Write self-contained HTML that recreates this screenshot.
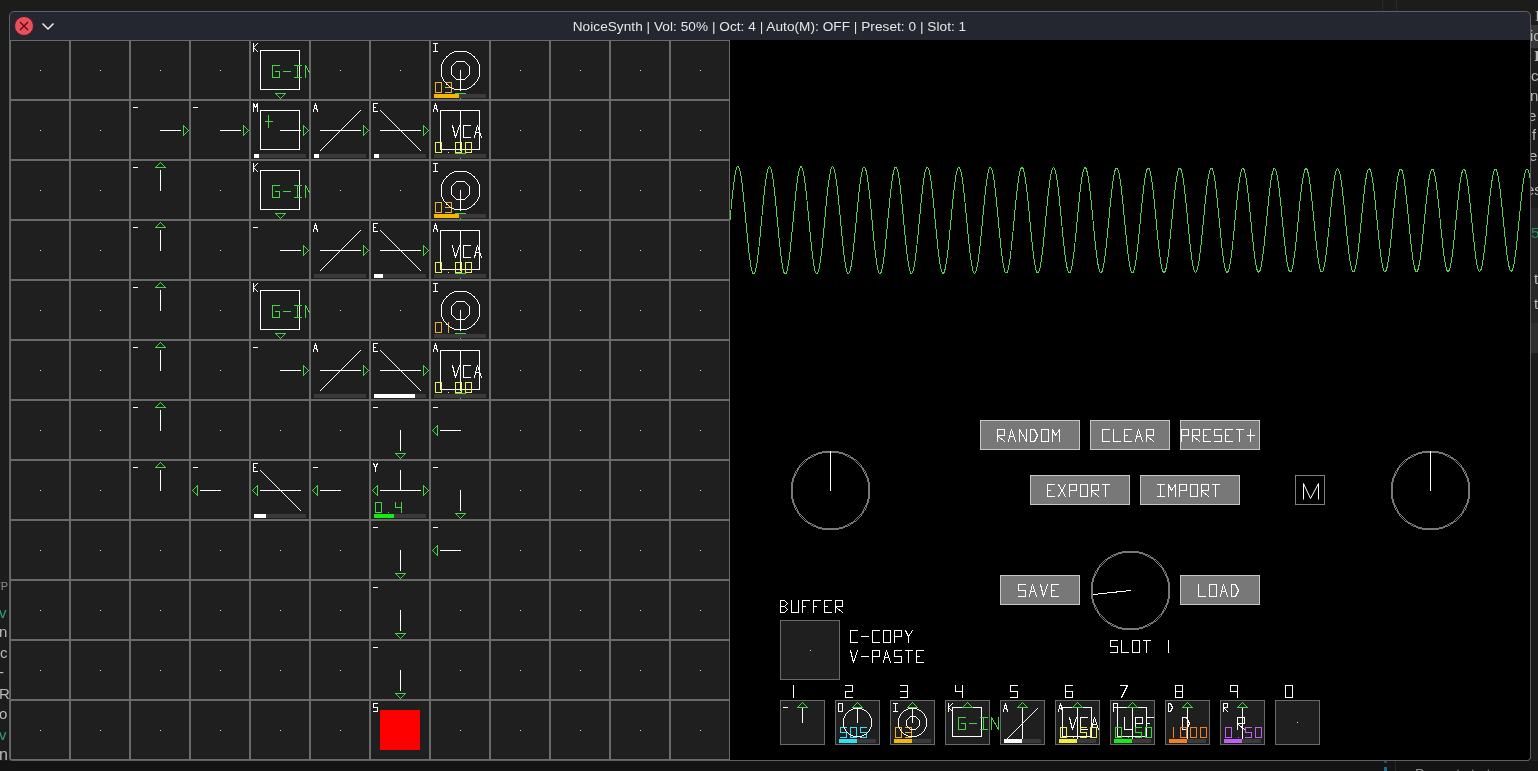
<!DOCTYPE html>
<html><head><meta charset="utf-8">
<style>
html,body{margin:0;padding:0;background:#1c1c1b;width:1538px;height:771px;overflow:hidden;position:relative}
#win{position:absolute;left:9px;top:11px;width:1520px;height:748px;border:1px solid #5d6067;border-radius:5px 5px 3px 3px;background:#24272f;overflow:hidden}
#title{position:absolute;left:0;top:13px;width:1539px;height:28px;line-height:28px;text-align:center;font-family:"Liberation Sans",sans-serif;font-size:13.6px;letter-spacing:0.05px;color:#e6e6e6;white-space:nowrap;will-change:transform}
.fr{position:absolute;font-family:"Liberation Sans",sans-serif;font-size:15px;color:#b8b8b8;white-space:nowrap;overflow:hidden;will-change:transform}
</style></head><body>
<div style="position:absolute;left:1382px;top:0;width:1px;height:11px;background:#2a2a2a"></div><div style="position:absolute;left:1396px;top:0;width:1px;height:11px;background:#2a2a2a"></div>
<div id="win"></div>
<svg width="1538" height="771" style="position:absolute;left:0;top:0">
<circle cx="24" cy="26" r="9.5" fill="#e8505c" stroke="#4a1a22" stroke-width="1"/>
<path d="M20 22L28 30M28 22L20 30" stroke="#5a0a14" stroke-width="1.3"/>
<path d="M42.5 23.5L48 29L53.5 23.5" stroke="#f0f0f0" stroke-width="1.5" fill="none"/>
</svg>
<div style="position:absolute;left:0;top:0;width:9px;height:771px;overflow:hidden">
<div class="fr" style="left:-6px;top:580px;font-size:11px;color:#8a8a8a">TP</div>
<div class="fr" style="left:-1px;top:604px;color:#2fa27a">v</div>
<div class="fr" style="left:-1px;top:623px">n</div>
<div class="fr" style="left:0px;top:644px">c</div>
<div class="fr" style="left:-1px;top:663px">-</div>
<div class="fr" style="left:-1px;top:685px">R</div>
<div class="fr" style="left:-1px;top:705px">o</div>
<div class="fr" style="left:-1px;top:726px;color:#2fa27a">v</div>
<div class="fr" style="left:-1px;top:746px;font-size:16px">n</div>
</div>
<div style="position:absolute;left:1531px;top:0;width:7px;height:771px;overflow:hidden;background:#1c1c1c">
<div style="position:absolute;left:0;top:25px;width:7px;height:23px;background:#363636"></div>
<div style="position:absolute;left:0;top:208px;width:7px;height:115px;background:#262626"></div><div style="position:absolute;left:0;top:323px;width:7px;height:30px;background:#2e2e2e"></div>
<div class="fr" style="left:4px;top:8px;font-family:'Liberation Serif',serif">I</div>
<div class="fr" style="left:-1px;top:27px">ic</div>
<div class="fr" style="left:3px;top:48px;font-family:'Liberation Serif',serif;font-weight:bold">I</div>
<div class="fr" style="left:0px;top:67px">c</div>
<div class="fr" style="left:-1px;top:87px">n</div>
<div class="fr" style="left:-3px;top:107px">e</div>
<div class="fr" style="left:1px;top:126px">f</div>
<div class="fr" style="left:-2px;top:147px">e</div>
<div class="fr" style="left:-5px;top:181px">es</div>
<div class="fr" style="left:0px;top:224px;color:#2a8a5a">5</div>
<div class="fr" style="left:3px;top:270px">t</div>
<div class="fr" style="left:3px;top:295px">t</div>
</div>
<div style="position:absolute;left:0;top:761px;width:1538px;height:10px;background:#141414"></div>
<div style="position:absolute;left:1384px;top:761px;width:3px;height:2px;background:#2a4a5a"></div><div style="position:absolute;left:1384px;top:767px;width:3px;height:4px;background:#1d6a8a"></div>
<div style="position:absolute;left:1395px;top:761px;width:1px;height:10px;background:#262626"></div>
<div class="fr" style="left:1415px;top:766px;font-size:14px;color:#8c8c8c">Prompts to try</div>
<div id="title">NoiceSynth | Vol: 50% | Oct: 4 | Auto(M): OFF | Preset: 0 | Slot: 1</div>
<svg width="1538" height="771" viewBox="0 0 1538 771" shape-rendering="crispEdges" stroke-linecap="square" stroke-linejoin="bevel" fill="none" stroke-width="1" style="position:absolute;left:0;top:0">
<rect x="10" y="40" width="60" height="60" fill="#1f1f1f"/>
<rect x="10.5" y="40.5" width="59" height="59" fill="none" stroke="#6a6a6a"/>
<rect x="70" y="40" width="60" height="60" fill="#1f1f1f"/>
<rect x="70.5" y="40.5" width="59" height="59" fill="none" stroke="#6a6a6a"/>
<rect x="130" y="40" width="60" height="60" fill="#1f1f1f"/>
<rect x="130.5" y="40.5" width="59" height="59" fill="none" stroke="#6a6a6a"/>
<rect x="190" y="40" width="60" height="60" fill="#1f1f1f"/>
<rect x="190.5" y="40.5" width="59" height="59" fill="none" stroke="#6a6a6a"/>
<rect x="250" y="40" width="60" height="60" fill="#1f1f1f"/>
<rect x="250.5" y="40.5" width="59" height="59" fill="none" stroke="#6a6a6a"/>
<rect x="310" y="40" width="60" height="60" fill="#1f1f1f"/>
<rect x="310.5" y="40.5" width="59" height="59" fill="none" stroke="#6a6a6a"/>
<rect x="370" y="40" width="60" height="60" fill="#1f1f1f"/>
<rect x="370.5" y="40.5" width="59" height="59" fill="none" stroke="#6a6a6a"/>
<rect x="430" y="40" width="60" height="60" fill="#1f1f1f"/>
<rect x="430.5" y="40.5" width="59" height="59" fill="none" stroke="#6a6a6a"/>
<rect x="490" y="40" width="60" height="60" fill="#1f1f1f"/>
<rect x="490.5" y="40.5" width="59" height="59" fill="none" stroke="#6a6a6a"/>
<rect x="550" y="40" width="60" height="60" fill="#1f1f1f"/>
<rect x="550.5" y="40.5" width="59" height="59" fill="none" stroke="#6a6a6a"/>
<rect x="610" y="40" width="60" height="60" fill="#1f1f1f"/>
<rect x="610.5" y="40.5" width="59" height="59" fill="none" stroke="#6a6a6a"/>
<rect x="670" y="40" width="60" height="60" fill="#1f1f1f"/>
<rect x="670.5" y="40.5" width="59" height="59" fill="none" stroke="#6a6a6a"/>
<rect x="10" y="100" width="60" height="60" fill="#1f1f1f"/>
<rect x="10.5" y="100.5" width="59" height="59" fill="none" stroke="#6a6a6a"/>
<rect x="70" y="100" width="60" height="60" fill="#1f1f1f"/>
<rect x="70.5" y="100.5" width="59" height="59" fill="none" stroke="#6a6a6a"/>
<rect x="130" y="100" width="60" height="60" fill="#1f1f1f"/>
<rect x="130.5" y="100.5" width="59" height="59" fill="none" stroke="#6a6a6a"/>
<rect x="190" y="100" width="60" height="60" fill="#1f1f1f"/>
<rect x="190.5" y="100.5" width="59" height="59" fill="none" stroke="#6a6a6a"/>
<rect x="250" y="100" width="60" height="60" fill="#1f1f1f"/>
<rect x="250.5" y="100.5" width="59" height="59" fill="none" stroke="#6a6a6a"/>
<rect x="310" y="100" width="60" height="60" fill="#1f1f1f"/>
<rect x="310.5" y="100.5" width="59" height="59" fill="none" stroke="#6a6a6a"/>
<rect x="370" y="100" width="60" height="60" fill="#1f1f1f"/>
<rect x="370.5" y="100.5" width="59" height="59" fill="none" stroke="#6a6a6a"/>
<rect x="430" y="100" width="60" height="60" fill="#1f1f1f"/>
<rect x="430.5" y="100.5" width="59" height="59" fill="none" stroke="#6a6a6a"/>
<rect x="490" y="100" width="60" height="60" fill="#1f1f1f"/>
<rect x="490.5" y="100.5" width="59" height="59" fill="none" stroke="#6a6a6a"/>
<rect x="550" y="100" width="60" height="60" fill="#1f1f1f"/>
<rect x="550.5" y="100.5" width="59" height="59" fill="none" stroke="#6a6a6a"/>
<rect x="610" y="100" width="60" height="60" fill="#1f1f1f"/>
<rect x="610.5" y="100.5" width="59" height="59" fill="none" stroke="#6a6a6a"/>
<rect x="670" y="100" width="60" height="60" fill="#1f1f1f"/>
<rect x="670.5" y="100.5" width="59" height="59" fill="none" stroke="#6a6a6a"/>
<rect x="10" y="160" width="60" height="60" fill="#1f1f1f"/>
<rect x="10.5" y="160.5" width="59" height="59" fill="none" stroke="#6a6a6a"/>
<rect x="70" y="160" width="60" height="60" fill="#1f1f1f"/>
<rect x="70.5" y="160.5" width="59" height="59" fill="none" stroke="#6a6a6a"/>
<rect x="130" y="160" width="60" height="60" fill="#1f1f1f"/>
<rect x="130.5" y="160.5" width="59" height="59" fill="none" stroke="#6a6a6a"/>
<rect x="190" y="160" width="60" height="60" fill="#1f1f1f"/>
<rect x="190.5" y="160.5" width="59" height="59" fill="none" stroke="#6a6a6a"/>
<rect x="250" y="160" width="60" height="60" fill="#1f1f1f"/>
<rect x="250.5" y="160.5" width="59" height="59" fill="none" stroke="#6a6a6a"/>
<rect x="310" y="160" width="60" height="60" fill="#1f1f1f"/>
<rect x="310.5" y="160.5" width="59" height="59" fill="none" stroke="#6a6a6a"/>
<rect x="370" y="160" width="60" height="60" fill="#1f1f1f"/>
<rect x="370.5" y="160.5" width="59" height="59" fill="none" stroke="#6a6a6a"/>
<rect x="430" y="160" width="60" height="60" fill="#1f1f1f"/>
<rect x="430.5" y="160.5" width="59" height="59" fill="none" stroke="#6a6a6a"/>
<rect x="490" y="160" width="60" height="60" fill="#1f1f1f"/>
<rect x="490.5" y="160.5" width="59" height="59" fill="none" stroke="#6a6a6a"/>
<rect x="550" y="160" width="60" height="60" fill="#1f1f1f"/>
<rect x="550.5" y="160.5" width="59" height="59" fill="none" stroke="#6a6a6a"/>
<rect x="610" y="160" width="60" height="60" fill="#1f1f1f"/>
<rect x="610.5" y="160.5" width="59" height="59" fill="none" stroke="#6a6a6a"/>
<rect x="670" y="160" width="60" height="60" fill="#1f1f1f"/>
<rect x="670.5" y="160.5" width="59" height="59" fill="none" stroke="#6a6a6a"/>
<rect x="10" y="220" width="60" height="60" fill="#1f1f1f"/>
<rect x="10.5" y="220.5" width="59" height="59" fill="none" stroke="#6a6a6a"/>
<rect x="70" y="220" width="60" height="60" fill="#1f1f1f"/>
<rect x="70.5" y="220.5" width="59" height="59" fill="none" stroke="#6a6a6a"/>
<rect x="130" y="220" width="60" height="60" fill="#1f1f1f"/>
<rect x="130.5" y="220.5" width="59" height="59" fill="none" stroke="#6a6a6a"/>
<rect x="190" y="220" width="60" height="60" fill="#1f1f1f"/>
<rect x="190.5" y="220.5" width="59" height="59" fill="none" stroke="#6a6a6a"/>
<rect x="250" y="220" width="60" height="60" fill="#1f1f1f"/>
<rect x="250.5" y="220.5" width="59" height="59" fill="none" stroke="#6a6a6a"/>
<rect x="310" y="220" width="60" height="60" fill="#1f1f1f"/>
<rect x="310.5" y="220.5" width="59" height="59" fill="none" stroke="#6a6a6a"/>
<rect x="370" y="220" width="60" height="60" fill="#1f1f1f"/>
<rect x="370.5" y="220.5" width="59" height="59" fill="none" stroke="#6a6a6a"/>
<rect x="430" y="220" width="60" height="60" fill="#1f1f1f"/>
<rect x="430.5" y="220.5" width="59" height="59" fill="none" stroke="#6a6a6a"/>
<rect x="490" y="220" width="60" height="60" fill="#1f1f1f"/>
<rect x="490.5" y="220.5" width="59" height="59" fill="none" stroke="#6a6a6a"/>
<rect x="550" y="220" width="60" height="60" fill="#1f1f1f"/>
<rect x="550.5" y="220.5" width="59" height="59" fill="none" stroke="#6a6a6a"/>
<rect x="610" y="220" width="60" height="60" fill="#1f1f1f"/>
<rect x="610.5" y="220.5" width="59" height="59" fill="none" stroke="#6a6a6a"/>
<rect x="670" y="220" width="60" height="60" fill="#1f1f1f"/>
<rect x="670.5" y="220.5" width="59" height="59" fill="none" stroke="#6a6a6a"/>
<rect x="10" y="280" width="60" height="60" fill="#1f1f1f"/>
<rect x="10.5" y="280.5" width="59" height="59" fill="none" stroke="#6a6a6a"/>
<rect x="70" y="280" width="60" height="60" fill="#1f1f1f"/>
<rect x="70.5" y="280.5" width="59" height="59" fill="none" stroke="#6a6a6a"/>
<rect x="130" y="280" width="60" height="60" fill="#1f1f1f"/>
<rect x="130.5" y="280.5" width="59" height="59" fill="none" stroke="#6a6a6a"/>
<rect x="190" y="280" width="60" height="60" fill="#1f1f1f"/>
<rect x="190.5" y="280.5" width="59" height="59" fill="none" stroke="#6a6a6a"/>
<rect x="250" y="280" width="60" height="60" fill="#1f1f1f"/>
<rect x="250.5" y="280.5" width="59" height="59" fill="none" stroke="#6a6a6a"/>
<rect x="310" y="280" width="60" height="60" fill="#1f1f1f"/>
<rect x="310.5" y="280.5" width="59" height="59" fill="none" stroke="#6a6a6a"/>
<rect x="370" y="280" width="60" height="60" fill="#1f1f1f"/>
<rect x="370.5" y="280.5" width="59" height="59" fill="none" stroke="#6a6a6a"/>
<rect x="430" y="280" width="60" height="60" fill="#1f1f1f"/>
<rect x="430.5" y="280.5" width="59" height="59" fill="none" stroke="#6a6a6a"/>
<rect x="490" y="280" width="60" height="60" fill="#1f1f1f"/>
<rect x="490.5" y="280.5" width="59" height="59" fill="none" stroke="#6a6a6a"/>
<rect x="550" y="280" width="60" height="60" fill="#1f1f1f"/>
<rect x="550.5" y="280.5" width="59" height="59" fill="none" stroke="#6a6a6a"/>
<rect x="610" y="280" width="60" height="60" fill="#1f1f1f"/>
<rect x="610.5" y="280.5" width="59" height="59" fill="none" stroke="#6a6a6a"/>
<rect x="670" y="280" width="60" height="60" fill="#1f1f1f"/>
<rect x="670.5" y="280.5" width="59" height="59" fill="none" stroke="#6a6a6a"/>
<rect x="10" y="340" width="60" height="60" fill="#1f1f1f"/>
<rect x="10.5" y="340.5" width="59" height="59" fill="none" stroke="#6a6a6a"/>
<rect x="70" y="340" width="60" height="60" fill="#1f1f1f"/>
<rect x="70.5" y="340.5" width="59" height="59" fill="none" stroke="#6a6a6a"/>
<rect x="130" y="340" width="60" height="60" fill="#1f1f1f"/>
<rect x="130.5" y="340.5" width="59" height="59" fill="none" stroke="#6a6a6a"/>
<rect x="190" y="340" width="60" height="60" fill="#1f1f1f"/>
<rect x="190.5" y="340.5" width="59" height="59" fill="none" stroke="#6a6a6a"/>
<rect x="250" y="340" width="60" height="60" fill="#1f1f1f"/>
<rect x="250.5" y="340.5" width="59" height="59" fill="none" stroke="#6a6a6a"/>
<rect x="310" y="340" width="60" height="60" fill="#1f1f1f"/>
<rect x="310.5" y="340.5" width="59" height="59" fill="none" stroke="#6a6a6a"/>
<rect x="370" y="340" width="60" height="60" fill="#1f1f1f"/>
<rect x="370.5" y="340.5" width="59" height="59" fill="none" stroke="#6a6a6a"/>
<rect x="430" y="340" width="60" height="60" fill="#1f1f1f"/>
<rect x="430.5" y="340.5" width="59" height="59" fill="none" stroke="#6a6a6a"/>
<rect x="490" y="340" width="60" height="60" fill="#1f1f1f"/>
<rect x="490.5" y="340.5" width="59" height="59" fill="none" stroke="#6a6a6a"/>
<rect x="550" y="340" width="60" height="60" fill="#1f1f1f"/>
<rect x="550.5" y="340.5" width="59" height="59" fill="none" stroke="#6a6a6a"/>
<rect x="610" y="340" width="60" height="60" fill="#1f1f1f"/>
<rect x="610.5" y="340.5" width="59" height="59" fill="none" stroke="#6a6a6a"/>
<rect x="670" y="340" width="60" height="60" fill="#1f1f1f"/>
<rect x="670.5" y="340.5" width="59" height="59" fill="none" stroke="#6a6a6a"/>
<rect x="10" y="400" width="60" height="60" fill="#1f1f1f"/>
<rect x="10.5" y="400.5" width="59" height="59" fill="none" stroke="#6a6a6a"/>
<rect x="70" y="400" width="60" height="60" fill="#1f1f1f"/>
<rect x="70.5" y="400.5" width="59" height="59" fill="none" stroke="#6a6a6a"/>
<rect x="130" y="400" width="60" height="60" fill="#1f1f1f"/>
<rect x="130.5" y="400.5" width="59" height="59" fill="none" stroke="#6a6a6a"/>
<rect x="190" y="400" width="60" height="60" fill="#1f1f1f"/>
<rect x="190.5" y="400.5" width="59" height="59" fill="none" stroke="#6a6a6a"/>
<rect x="250" y="400" width="60" height="60" fill="#1f1f1f"/>
<rect x="250.5" y="400.5" width="59" height="59" fill="none" stroke="#6a6a6a"/>
<rect x="310" y="400" width="60" height="60" fill="#1f1f1f"/>
<rect x="310.5" y="400.5" width="59" height="59" fill="none" stroke="#6a6a6a"/>
<rect x="370" y="400" width="60" height="60" fill="#1f1f1f"/>
<rect x="370.5" y="400.5" width="59" height="59" fill="none" stroke="#6a6a6a"/>
<rect x="430" y="400" width="60" height="60" fill="#1f1f1f"/>
<rect x="430.5" y="400.5" width="59" height="59" fill="none" stroke="#6a6a6a"/>
<rect x="490" y="400" width="60" height="60" fill="#1f1f1f"/>
<rect x="490.5" y="400.5" width="59" height="59" fill="none" stroke="#6a6a6a"/>
<rect x="550" y="400" width="60" height="60" fill="#1f1f1f"/>
<rect x="550.5" y="400.5" width="59" height="59" fill="none" stroke="#6a6a6a"/>
<rect x="610" y="400" width="60" height="60" fill="#1f1f1f"/>
<rect x="610.5" y="400.5" width="59" height="59" fill="none" stroke="#6a6a6a"/>
<rect x="670" y="400" width="60" height="60" fill="#1f1f1f"/>
<rect x="670.5" y="400.5" width="59" height="59" fill="none" stroke="#6a6a6a"/>
<rect x="10" y="460" width="60" height="60" fill="#1f1f1f"/>
<rect x="10.5" y="460.5" width="59" height="59" fill="none" stroke="#6a6a6a"/>
<rect x="70" y="460" width="60" height="60" fill="#1f1f1f"/>
<rect x="70.5" y="460.5" width="59" height="59" fill="none" stroke="#6a6a6a"/>
<rect x="130" y="460" width="60" height="60" fill="#1f1f1f"/>
<rect x="130.5" y="460.5" width="59" height="59" fill="none" stroke="#6a6a6a"/>
<rect x="190" y="460" width="60" height="60" fill="#1f1f1f"/>
<rect x="190.5" y="460.5" width="59" height="59" fill="none" stroke="#6a6a6a"/>
<rect x="250" y="460" width="60" height="60" fill="#1f1f1f"/>
<rect x="250.5" y="460.5" width="59" height="59" fill="none" stroke="#6a6a6a"/>
<rect x="310" y="460" width="60" height="60" fill="#1f1f1f"/>
<rect x="310.5" y="460.5" width="59" height="59" fill="none" stroke="#6a6a6a"/>
<rect x="370" y="460" width="60" height="60" fill="#1f1f1f"/>
<rect x="370.5" y="460.5" width="59" height="59" fill="none" stroke="#6a6a6a"/>
<rect x="430" y="460" width="60" height="60" fill="#1f1f1f"/>
<rect x="430.5" y="460.5" width="59" height="59" fill="none" stroke="#6a6a6a"/>
<rect x="490" y="460" width="60" height="60" fill="#1f1f1f"/>
<rect x="490.5" y="460.5" width="59" height="59" fill="none" stroke="#6a6a6a"/>
<rect x="550" y="460" width="60" height="60" fill="#1f1f1f"/>
<rect x="550.5" y="460.5" width="59" height="59" fill="none" stroke="#6a6a6a"/>
<rect x="610" y="460" width="60" height="60" fill="#1f1f1f"/>
<rect x="610.5" y="460.5" width="59" height="59" fill="none" stroke="#6a6a6a"/>
<rect x="670" y="460" width="60" height="60" fill="#1f1f1f"/>
<rect x="670.5" y="460.5" width="59" height="59" fill="none" stroke="#6a6a6a"/>
<rect x="10" y="520" width="60" height="60" fill="#1f1f1f"/>
<rect x="10.5" y="520.5" width="59" height="59" fill="none" stroke="#6a6a6a"/>
<rect x="70" y="520" width="60" height="60" fill="#1f1f1f"/>
<rect x="70.5" y="520.5" width="59" height="59" fill="none" stroke="#6a6a6a"/>
<rect x="130" y="520" width="60" height="60" fill="#1f1f1f"/>
<rect x="130.5" y="520.5" width="59" height="59" fill="none" stroke="#6a6a6a"/>
<rect x="190" y="520" width="60" height="60" fill="#1f1f1f"/>
<rect x="190.5" y="520.5" width="59" height="59" fill="none" stroke="#6a6a6a"/>
<rect x="250" y="520" width="60" height="60" fill="#1f1f1f"/>
<rect x="250.5" y="520.5" width="59" height="59" fill="none" stroke="#6a6a6a"/>
<rect x="310" y="520" width="60" height="60" fill="#1f1f1f"/>
<rect x="310.5" y="520.5" width="59" height="59" fill="none" stroke="#6a6a6a"/>
<rect x="370" y="520" width="60" height="60" fill="#1f1f1f"/>
<rect x="370.5" y="520.5" width="59" height="59" fill="none" stroke="#6a6a6a"/>
<rect x="430" y="520" width="60" height="60" fill="#1f1f1f"/>
<rect x="430.5" y="520.5" width="59" height="59" fill="none" stroke="#6a6a6a"/>
<rect x="490" y="520" width="60" height="60" fill="#1f1f1f"/>
<rect x="490.5" y="520.5" width="59" height="59" fill="none" stroke="#6a6a6a"/>
<rect x="550" y="520" width="60" height="60" fill="#1f1f1f"/>
<rect x="550.5" y="520.5" width="59" height="59" fill="none" stroke="#6a6a6a"/>
<rect x="610" y="520" width="60" height="60" fill="#1f1f1f"/>
<rect x="610.5" y="520.5" width="59" height="59" fill="none" stroke="#6a6a6a"/>
<rect x="670" y="520" width="60" height="60" fill="#1f1f1f"/>
<rect x="670.5" y="520.5" width="59" height="59" fill="none" stroke="#6a6a6a"/>
<rect x="10" y="580" width="60" height="60" fill="#1f1f1f"/>
<rect x="10.5" y="580.5" width="59" height="59" fill="none" stroke="#6a6a6a"/>
<rect x="70" y="580" width="60" height="60" fill="#1f1f1f"/>
<rect x="70.5" y="580.5" width="59" height="59" fill="none" stroke="#6a6a6a"/>
<rect x="130" y="580" width="60" height="60" fill="#1f1f1f"/>
<rect x="130.5" y="580.5" width="59" height="59" fill="none" stroke="#6a6a6a"/>
<rect x="190" y="580" width="60" height="60" fill="#1f1f1f"/>
<rect x="190.5" y="580.5" width="59" height="59" fill="none" stroke="#6a6a6a"/>
<rect x="250" y="580" width="60" height="60" fill="#1f1f1f"/>
<rect x="250.5" y="580.5" width="59" height="59" fill="none" stroke="#6a6a6a"/>
<rect x="310" y="580" width="60" height="60" fill="#1f1f1f"/>
<rect x="310.5" y="580.5" width="59" height="59" fill="none" stroke="#6a6a6a"/>
<rect x="370" y="580" width="60" height="60" fill="#1f1f1f"/>
<rect x="370.5" y="580.5" width="59" height="59" fill="none" stroke="#6a6a6a"/>
<rect x="430" y="580" width="60" height="60" fill="#1f1f1f"/>
<rect x="430.5" y="580.5" width="59" height="59" fill="none" stroke="#6a6a6a"/>
<rect x="490" y="580" width="60" height="60" fill="#1f1f1f"/>
<rect x="490.5" y="580.5" width="59" height="59" fill="none" stroke="#6a6a6a"/>
<rect x="550" y="580" width="60" height="60" fill="#1f1f1f"/>
<rect x="550.5" y="580.5" width="59" height="59" fill="none" stroke="#6a6a6a"/>
<rect x="610" y="580" width="60" height="60" fill="#1f1f1f"/>
<rect x="610.5" y="580.5" width="59" height="59" fill="none" stroke="#6a6a6a"/>
<rect x="670" y="580" width="60" height="60" fill="#1f1f1f"/>
<rect x="670.5" y="580.5" width="59" height="59" fill="none" stroke="#6a6a6a"/>
<rect x="10" y="640" width="60" height="60" fill="#1f1f1f"/>
<rect x="10.5" y="640.5" width="59" height="59" fill="none" stroke="#6a6a6a"/>
<rect x="70" y="640" width="60" height="60" fill="#1f1f1f"/>
<rect x="70.5" y="640.5" width="59" height="59" fill="none" stroke="#6a6a6a"/>
<rect x="130" y="640" width="60" height="60" fill="#1f1f1f"/>
<rect x="130.5" y="640.5" width="59" height="59" fill="none" stroke="#6a6a6a"/>
<rect x="190" y="640" width="60" height="60" fill="#1f1f1f"/>
<rect x="190.5" y="640.5" width="59" height="59" fill="none" stroke="#6a6a6a"/>
<rect x="250" y="640" width="60" height="60" fill="#1f1f1f"/>
<rect x="250.5" y="640.5" width="59" height="59" fill="none" stroke="#6a6a6a"/>
<rect x="310" y="640" width="60" height="60" fill="#1f1f1f"/>
<rect x="310.5" y="640.5" width="59" height="59" fill="none" stroke="#6a6a6a"/>
<rect x="370" y="640" width="60" height="60" fill="#1f1f1f"/>
<rect x="370.5" y="640.5" width="59" height="59" fill="none" stroke="#6a6a6a"/>
<rect x="430" y="640" width="60" height="60" fill="#1f1f1f"/>
<rect x="430.5" y="640.5" width="59" height="59" fill="none" stroke="#6a6a6a"/>
<rect x="490" y="640" width="60" height="60" fill="#1f1f1f"/>
<rect x="490.5" y="640.5" width="59" height="59" fill="none" stroke="#6a6a6a"/>
<rect x="550" y="640" width="60" height="60" fill="#1f1f1f"/>
<rect x="550.5" y="640.5" width="59" height="59" fill="none" stroke="#6a6a6a"/>
<rect x="610" y="640" width="60" height="60" fill="#1f1f1f"/>
<rect x="610.5" y="640.5" width="59" height="59" fill="none" stroke="#6a6a6a"/>
<rect x="670" y="640" width="60" height="60" fill="#1f1f1f"/>
<rect x="670.5" y="640.5" width="59" height="59" fill="none" stroke="#6a6a6a"/>
<rect x="10" y="700" width="60" height="60" fill="#1f1f1f"/>
<rect x="10.5" y="700.5" width="59" height="59" fill="none" stroke="#6a6a6a"/>
<rect x="70" y="700" width="60" height="60" fill="#1f1f1f"/>
<rect x="70.5" y="700.5" width="59" height="59" fill="none" stroke="#6a6a6a"/>
<rect x="130" y="700" width="60" height="60" fill="#1f1f1f"/>
<rect x="130.5" y="700.5" width="59" height="59" fill="none" stroke="#6a6a6a"/>
<rect x="190" y="700" width="60" height="60" fill="#1f1f1f"/>
<rect x="190.5" y="700.5" width="59" height="59" fill="none" stroke="#6a6a6a"/>
<rect x="250" y="700" width="60" height="60" fill="#1f1f1f"/>
<rect x="250.5" y="700.5" width="59" height="59" fill="none" stroke="#6a6a6a"/>
<rect x="310" y="700" width="60" height="60" fill="#1f1f1f"/>
<rect x="310.5" y="700.5" width="59" height="59" fill="none" stroke="#6a6a6a"/>
<rect x="370" y="700" width="60" height="60" fill="#1f1f1f"/>
<rect x="370.5" y="700.5" width="59" height="59" fill="none" stroke="#6a6a6a"/>
<rect x="430" y="700" width="60" height="60" fill="#1f1f1f"/>
<rect x="430.5" y="700.5" width="59" height="59" fill="none" stroke="#6a6a6a"/>
<rect x="490" y="700" width="60" height="60" fill="#1f1f1f"/>
<rect x="490.5" y="700.5" width="59" height="59" fill="none" stroke="#6a6a6a"/>
<rect x="550" y="700" width="60" height="60" fill="#1f1f1f"/>
<rect x="550.5" y="700.5" width="59" height="59" fill="none" stroke="#6a6a6a"/>
<rect x="610" y="700" width="60" height="60" fill="#1f1f1f"/>
<rect x="610.5" y="700.5" width="59" height="59" fill="none" stroke="#6a6a6a"/>
<rect x="670" y="700" width="60" height="60" fill="#1f1f1f"/>
<rect x="670.5" y="700.5" width="59" height="59" fill="none" stroke="#6a6a6a"/>
<rect x="40" y="70" width="1" height="1" fill="#d8d8d8"/>
<rect x="100" y="70" width="1" height="1" fill="#d8d8d8"/>
<rect x="160" y="70" width="1" height="1" fill="#d8d8d8"/>
<rect x="220" y="70" width="1" height="1" fill="#d8d8d8"/>
<path d="M253.5 43.5L253.5 51.5M257.5 43.5L253.5 47.5L257.5 51.5" stroke="#fff"/>
<rect x="260.5" y="50.5" width="39" height="39" fill="none" stroke="#fff"/>
<path d="M275.5 93.5L285.5 93.5L280.5 98.5Z" stroke="#44d444" fill="none"/>
<rect x="340" y="70" width="1" height="1" fill="#d8d8d8"/>
<rect x="400" y="70" width="1" height="1" fill="#d8d8d8"/>
<path d="M433.5 43.5L437.5 43.5M435.5 43.5L435.5 51.5M433.5 51.5L437.5 51.5" stroke="#fff"/>
<path d="M435.5 82.5L441.5 82.5L441.5 92.5L435.5 92.5L435.5 82.5M445.5 82.5L451.5 82.5L451.5 92.5L445.5 92.5M445.5 87.5L451.5 87.5" stroke="#e8b030"/>
<path d="M441 64h1v1h-1zM441 65h1v1h-1zM441 66h1v1h-1zM441 67h1v1h-1zM441 68h1v1h-1zM441 69h1v1h-1zM441 70h1v1h-1zM441 71h1v1h-1zM441 72h1v1h-1zM441 73h1v1h-1zM441 74h1v1h-1zM441 75h1v1h-1zM441 76h1v1h-1zM442 62h1v1h-1zM442 63h1v1h-1zM442 77h1v1h-1zM442 78h1v1h-1zM443 60h1v1h-1zM443 61h1v1h-1zM443 79h1v1h-1zM443 80h1v1h-1zM444 59h1v1h-1zM444 81h1v1h-1zM445 58h1v1h-1zM445 82h1v1h-1zM446 56h1v1h-1zM446 57h1v1h-1zM446 83h1v1h-1zM446 84h1v1h-1zM447 56h1v1h-1zM447 84h1v1h-1zM448 55h1v1h-1zM448 85h1v1h-1zM449 54h1v1h-1zM449 86h1v1h-1zM450 53h1v1h-1zM450 87h1v1h-1zM451 53h1v1h-1zM451 87h1v1h-1zM452 52h1v1h-1zM452 88h1v1h-1zM453 52h1v1h-1zM453 88h1v1h-1zM454 51h1v1h-1zM454 89h1v1h-1zM455 51h1v1h-1zM455 89h1v1h-1zM456 51h1v1h-1zM456 89h1v1h-1zM457 51h1v1h-1zM457 89h1v1h-1zM458 51h1v1h-1zM458 89h1v1h-1zM459 51h1v1h-1zM459 89h1v1h-1zM460 51h1v1h-1zM460 89h1v1h-1zM461 51h1v1h-1zM461 89h1v1h-1zM462 51h1v1h-1zM462 89h1v1h-1zM463 51h1v1h-1zM463 89h1v1h-1zM464 51h1v1h-1zM464 89h1v1h-1zM465 51h1v1h-1zM465 89h1v1h-1zM466 51h1v1h-1zM466 89h1v1h-1zM467 52h1v1h-1zM467 88h1v1h-1zM468 52h1v1h-1zM468 88h1v1h-1zM469 53h1v1h-1zM469 87h1v1h-1zM470 53h1v1h-1zM470 87h1v1h-1zM471 54h1v1h-1zM471 86h1v1h-1zM472 55h1v1h-1zM472 85h1v1h-1zM473 56h1v1h-1zM473 84h1v1h-1zM474 56h1v1h-1zM474 57h1v1h-1zM474 83h1v1h-1zM474 84h1v1h-1zM475 58h1v1h-1zM475 82h1v1h-1zM476 59h1v1h-1zM476 81h1v1h-1zM477 60h1v1h-1zM477 61h1v1h-1zM477 79h1v1h-1zM477 80h1v1h-1zM478 62h1v1h-1zM478 63h1v1h-1zM478 77h1v1h-1zM478 78h1v1h-1zM479 64h1v1h-1zM479 65h1v1h-1zM479 66h1v1h-1zM479 67h1v1h-1zM479 68h1v1h-1zM479 69h1v1h-1zM479 70h1v1h-1zM479 71h1v1h-1zM479 72h1v1h-1zM479 73h1v1h-1zM479 74h1v1h-1zM479 75h1v1h-1zM479 76h1v1h-1z" fill="#fff" stroke="none"/>
<path d="M451 66h1v1h-1zM451 67h1v1h-1zM451 68h1v1h-1zM451 69h1v1h-1zM451 70h1v1h-1zM451 71h1v1h-1zM451 72h1v1h-1zM451 73h1v1h-1zM451 74h1v1h-1zM452 65h1v1h-1zM452 75h1v1h-1zM453 64h1v1h-1zM453 76h1v1h-1zM454 63h1v1h-1zM454 77h1v1h-1zM455 62h1v1h-1zM455 78h1v1h-1zM456 61h1v1h-1zM456 79h1v1h-1zM457 61h1v1h-1zM457 79h1v1h-1zM458 61h1v1h-1zM458 79h1v1h-1zM459 61h1v1h-1zM459 79h1v1h-1zM460 61h1v1h-1zM460 79h1v1h-1zM461 61h1v1h-1zM461 79h1v1h-1zM462 61h1v1h-1zM462 79h1v1h-1zM463 61h1v1h-1zM463 79h1v1h-1zM464 61h1v1h-1zM464 79h1v1h-1zM465 62h1v1h-1zM465 78h1v1h-1zM466 63h1v1h-1zM466 77h1v1h-1zM467 64h1v1h-1zM467 76h1v1h-1zM468 65h1v1h-1zM468 75h1v1h-1zM469 66h1v1h-1zM469 67h1v1h-1zM469 68h1v1h-1zM469 69h1v1h-1zM469 70h1v1h-1zM469 71h1v1h-1zM469 72h1v1h-1zM469 73h1v1h-1zM469 74h1v1h-1z" fill="#fff" stroke="none"/>
<path d="M460.5 70.5L460.5 90.5" stroke="#fff"/>
<path d="M455.5 93.5L465.5 93.5L460.5 98.5Z" stroke="#44d444" fill="none"/>
<rect x="434" y="94" width="52" height="4" fill="#3a3a3a"/>
<rect x="434" y="94" width="25" height="4" fill="#f5b800"/>
<rect x="520" y="70" width="1" height="1" fill="#d8d8d8"/>
<rect x="580" y="70" width="1" height="1" fill="#d8d8d8"/>
<rect x="640" y="70" width="1" height="1" fill="#d8d8d8"/>
<rect x="700" y="70" width="1" height="1" fill="#d8d8d8"/>
<rect x="40" y="130" width="1" height="1" fill="#d8d8d8"/>
<rect x="100" y="130" width="1" height="1" fill="#d8d8d8"/>
<path d="M133.5 107.5L137.5 107.5" stroke="#fff"/>
<path d="M160.5 130.5L180.5 130.5" stroke="#fff"/>
<path d="M183.5 125.5L183.5 135.5L188.5 130.5Z" stroke="#44d444" fill="none"/>
<path d="M193.5 107.5L197.5 107.5" stroke="#fff"/>
<path d="M220.5 130.5L240.5 130.5" stroke="#fff"/>
<path d="M243.5 125.5L243.5 135.5L248.5 130.5Z" stroke="#44d444" fill="none"/>
<path d="M253.5 111.5L253.5 103.5L255.5 107.5L257.5 103.5L257.5 111.5" stroke="#fff"/>
<rect x="260.5" y="110.5" width="39" height="39" fill="none" stroke="#fff"/>
<path d="M265.5 121.5L272.5 121.5M268.5 115.5L268.5 127.5" stroke="#44d444"/>
<path d="M280.5 130.5L300.5 130.5" stroke="#fff"/>
<path d="M303.5 125.5L303.5 135.5L308.5 130.5Z" stroke="#44d444" fill="none"/>
<rect x="254" y="154" width="52" height="4" fill="#3a3a3a"/>
<rect x="254" y="154" width="5" height="4" fill="#fff"/>
<path d="M313.5 111.5L315.5 103.5L317.5 111.5M314.5 108.5L316.5 108.5" stroke="#fff"/>
<path d="M320.5 130.5L360.5 130.5" stroke="#fff"/>
<path d="M320.5 150.5L360.5 110.5" stroke="#fff"/>
<path d="M363.5 125.5L363.5 135.5L368.5 130.5Z" stroke="#44d444" fill="none"/>
<rect x="314" y="154" width="52" height="4" fill="#3a3a3a"/>
<rect x="314" y="154" width="5" height="4" fill="#fff"/>
<path d="M377.5 103.5L373.5 103.5L373.5 111.5L377.5 111.5M373.5 107.5L375.5 107.5" stroke="#fff"/>
<path d="M380.5 130.5L420.5 130.5" stroke="#fff"/>
<path d="M380.5 110.5L420.5 150.5" stroke="#fff"/>
<path d="M423.5 125.5L423.5 135.5L428.5 130.5Z" stroke="#44d444" fill="none"/>
<rect x="374" y="154" width="52" height="4" fill="#3a3a3a"/>
<rect x="374" y="154" width="5" height="4" fill="#fff"/>
<path d="M433.5 111.5L435.5 103.5L437.5 111.5M434.5 108.5L436.5 108.5" stroke="#fff"/>
<rect x="440.5" y="110.5" width="39" height="39" fill="none" stroke="#fff"/>
<path d="M460.5 110.5L460.5 150.5" stroke="#fff"/>
<path d="M455.5 153.5L465.5 153.5L460.5 158.5Z" stroke="#44d444" fill="none"/>
<path d="M452.5 125.5L455.5 137.5L459.5 125.5M470.5 125.5L463.5 125.5L463.5 137.5L470.5 137.5M474.5 137.5L477.5 125.5L481.5 137.5M475.5 132.5L479.5 132.5" stroke="#fff"/>
<path d="M435.5 142.5L441.5 142.5L441.5 152.5L435.5 152.5L435.5 142.5M448.5 152.5h0M455.5 142.5L461.5 142.5L461.5 152.5L455.5 152.5L455.5 142.5M465.5 142.5L471.5 142.5L471.5 152.5L465.5 152.5L465.5 142.5" stroke="#f0f050"/>
<rect x="434" y="154" width="52" height="4" fill="#3a3a3a"/>
<rect x="520" y="130" width="1" height="1" fill="#d8d8d8"/>
<rect x="580" y="130" width="1" height="1" fill="#d8d8d8"/>
<rect x="640" y="130" width="1" height="1" fill="#d8d8d8"/>
<rect x="700" y="130" width="1" height="1" fill="#d8d8d8"/>
<rect x="40" y="190" width="1" height="1" fill="#d8d8d8"/>
<rect x="100" y="190" width="1" height="1" fill="#d8d8d8"/>
<path d="M133.5 167.5L137.5 167.5" stroke="#fff"/>
<path d="M160.5 170.5L160.5 190.5" stroke="#fff"/>
<path d="M155.5 167.5L165.5 167.5L160.5 162.5Z" stroke="#44d444" fill="none"/>
<rect x="220" y="190" width="1" height="1" fill="#d8d8d8"/>
<path d="M253.5 163.5L253.5 171.5M257.5 163.5L253.5 167.5L257.5 171.5" stroke="#fff"/>
<rect x="260.5" y="170.5" width="39" height="39" fill="none" stroke="#fff"/>
<path d="M275.5 213.5L285.5 213.5L280.5 218.5Z" stroke="#44d444" fill="none"/>
<rect x="340" y="190" width="1" height="1" fill="#d8d8d8"/>
<rect x="400" y="190" width="1" height="1" fill="#d8d8d8"/>
<path d="M433.5 163.5L437.5 163.5M435.5 163.5L435.5 171.5M433.5 171.5L437.5 171.5" stroke="#fff"/>
<path d="M435.5 202.5L441.5 202.5L441.5 212.5L435.5 212.5L435.5 202.5M445.5 202.5L451.5 202.5L451.5 212.5L445.5 212.5M445.5 207.5L451.5 207.5" stroke="#e8b030"/>
<path d="M441 184h1v1h-1zM441 185h1v1h-1zM441 186h1v1h-1zM441 187h1v1h-1zM441 188h1v1h-1zM441 189h1v1h-1zM441 190h1v1h-1zM441 191h1v1h-1zM441 192h1v1h-1zM441 193h1v1h-1zM441 194h1v1h-1zM441 195h1v1h-1zM441 196h1v1h-1zM442 182h1v1h-1zM442 183h1v1h-1zM442 197h1v1h-1zM442 198h1v1h-1zM443 180h1v1h-1zM443 181h1v1h-1zM443 199h1v1h-1zM443 200h1v1h-1zM444 179h1v1h-1zM444 201h1v1h-1zM445 178h1v1h-1zM445 202h1v1h-1zM446 176h1v1h-1zM446 177h1v1h-1zM446 203h1v1h-1zM446 204h1v1h-1zM447 176h1v1h-1zM447 204h1v1h-1zM448 175h1v1h-1zM448 205h1v1h-1zM449 174h1v1h-1zM449 206h1v1h-1zM450 173h1v1h-1zM450 207h1v1h-1zM451 173h1v1h-1zM451 207h1v1h-1zM452 172h1v1h-1zM452 208h1v1h-1zM453 172h1v1h-1zM453 208h1v1h-1zM454 171h1v1h-1zM454 209h1v1h-1zM455 171h1v1h-1zM455 209h1v1h-1zM456 171h1v1h-1zM456 209h1v1h-1zM457 171h1v1h-1zM457 209h1v1h-1zM458 171h1v1h-1zM458 209h1v1h-1zM459 171h1v1h-1zM459 209h1v1h-1zM460 171h1v1h-1zM460 209h1v1h-1zM461 171h1v1h-1zM461 209h1v1h-1zM462 171h1v1h-1zM462 209h1v1h-1zM463 171h1v1h-1zM463 209h1v1h-1zM464 171h1v1h-1zM464 209h1v1h-1zM465 171h1v1h-1zM465 209h1v1h-1zM466 171h1v1h-1zM466 209h1v1h-1zM467 172h1v1h-1zM467 208h1v1h-1zM468 172h1v1h-1zM468 208h1v1h-1zM469 173h1v1h-1zM469 207h1v1h-1zM470 173h1v1h-1zM470 207h1v1h-1zM471 174h1v1h-1zM471 206h1v1h-1zM472 175h1v1h-1zM472 205h1v1h-1zM473 176h1v1h-1zM473 204h1v1h-1zM474 176h1v1h-1zM474 177h1v1h-1zM474 203h1v1h-1zM474 204h1v1h-1zM475 178h1v1h-1zM475 202h1v1h-1zM476 179h1v1h-1zM476 201h1v1h-1zM477 180h1v1h-1zM477 181h1v1h-1zM477 199h1v1h-1zM477 200h1v1h-1zM478 182h1v1h-1zM478 183h1v1h-1zM478 197h1v1h-1zM478 198h1v1h-1zM479 184h1v1h-1zM479 185h1v1h-1zM479 186h1v1h-1zM479 187h1v1h-1zM479 188h1v1h-1zM479 189h1v1h-1zM479 190h1v1h-1zM479 191h1v1h-1zM479 192h1v1h-1zM479 193h1v1h-1zM479 194h1v1h-1zM479 195h1v1h-1zM479 196h1v1h-1z" fill="#fff" stroke="none"/>
<path d="M451 186h1v1h-1zM451 187h1v1h-1zM451 188h1v1h-1zM451 189h1v1h-1zM451 190h1v1h-1zM451 191h1v1h-1zM451 192h1v1h-1zM451 193h1v1h-1zM451 194h1v1h-1zM452 185h1v1h-1zM452 195h1v1h-1zM453 184h1v1h-1zM453 196h1v1h-1zM454 183h1v1h-1zM454 197h1v1h-1zM455 182h1v1h-1zM455 198h1v1h-1zM456 181h1v1h-1zM456 199h1v1h-1zM457 181h1v1h-1zM457 199h1v1h-1zM458 181h1v1h-1zM458 199h1v1h-1zM459 181h1v1h-1zM459 199h1v1h-1zM460 181h1v1h-1zM460 199h1v1h-1zM461 181h1v1h-1zM461 199h1v1h-1zM462 181h1v1h-1zM462 199h1v1h-1zM463 181h1v1h-1zM463 199h1v1h-1zM464 181h1v1h-1zM464 199h1v1h-1zM465 182h1v1h-1zM465 198h1v1h-1zM466 183h1v1h-1zM466 197h1v1h-1zM467 184h1v1h-1zM467 196h1v1h-1zM468 185h1v1h-1zM468 195h1v1h-1zM469 186h1v1h-1zM469 187h1v1h-1zM469 188h1v1h-1zM469 189h1v1h-1zM469 190h1v1h-1zM469 191h1v1h-1zM469 192h1v1h-1zM469 193h1v1h-1zM469 194h1v1h-1z" fill="#fff" stroke="none"/>
<path d="M460.5 190.5L460.5 210.5" stroke="#fff"/>
<path d="M455.5 213.5L465.5 213.5L460.5 218.5Z" stroke="#44d444" fill="none"/>
<rect x="434" y="214" width="52" height="4" fill="#3a3a3a"/>
<rect x="434" y="214" width="25" height="4" fill="#f5b800"/>
<rect x="520" y="190" width="1" height="1" fill="#d8d8d8"/>
<rect x="580" y="190" width="1" height="1" fill="#d8d8d8"/>
<rect x="640" y="190" width="1" height="1" fill="#d8d8d8"/>
<rect x="700" y="190" width="1" height="1" fill="#d8d8d8"/>
<rect x="40" y="250" width="1" height="1" fill="#d8d8d8"/>
<rect x="100" y="250" width="1" height="1" fill="#d8d8d8"/>
<path d="M133.5 227.5L137.5 227.5" stroke="#fff"/>
<path d="M160.5 230.5L160.5 250.5" stroke="#fff"/>
<path d="M155.5 227.5L165.5 227.5L160.5 222.5Z" stroke="#44d444" fill="none"/>
<rect x="220" y="250" width="1" height="1" fill="#d8d8d8"/>
<path d="M253.5 227.5L257.5 227.5" stroke="#fff"/>
<path d="M280.5 250.5L300.5 250.5" stroke="#fff"/>
<path d="M303.5 245.5L303.5 255.5L308.5 250.5Z" stroke="#44d444" fill="none"/>
<path d="M313.5 231.5L315.5 223.5L317.5 231.5M314.5 228.5L316.5 228.5" stroke="#fff"/>
<path d="M320.5 250.5L360.5 250.5" stroke="#fff"/>
<path d="M320.5 270.5L360.5 230.5" stroke="#fff"/>
<path d="M363.5 245.5L363.5 255.5L368.5 250.5Z" stroke="#44d444" fill="none"/>
<rect x="314" y="274" width="52" height="4" fill="#3a3a3a"/>
<path d="M377.5 223.5L373.5 223.5L373.5 231.5L377.5 231.5M373.5 227.5L375.5 227.5" stroke="#fff"/>
<path d="M380.5 250.5L420.5 250.5" stroke="#fff"/>
<path d="M380.5 230.5L420.5 270.5" stroke="#fff"/>
<path d="M423.5 245.5L423.5 255.5L428.5 250.5Z" stroke="#44d444" fill="none"/>
<rect x="374" y="274" width="52" height="4" fill="#3a3a3a"/>
<rect x="374" y="274" width="9" height="4" fill="#fff"/>
<path d="M433.5 231.5L435.5 223.5L437.5 231.5M434.5 228.5L436.5 228.5" stroke="#fff"/>
<rect x="440.5" y="230.5" width="39" height="39" fill="none" stroke="#fff"/>
<path d="M460.5 230.5L460.5 270.5" stroke="#fff"/>
<path d="M455.5 273.5L465.5 273.5L460.5 278.5Z" stroke="#44d444" fill="none"/>
<path d="M452.5 245.5L455.5 257.5L459.5 245.5M470.5 245.5L463.5 245.5L463.5 257.5L470.5 257.5M474.5 257.5L477.5 245.5L481.5 257.5M475.5 252.5L479.5 252.5" stroke="#fff"/>
<path d="M435.5 262.5L441.5 262.5L441.5 272.5L435.5 272.5L435.5 262.5M448.5 272.5h0M455.5 262.5L461.5 262.5L461.5 272.5L455.5 272.5L455.5 262.5M465.5 262.5L471.5 262.5L471.5 272.5L465.5 272.5L465.5 262.5" stroke="#f0f050"/>
<rect x="434" y="274" width="52" height="4" fill="#3a3a3a"/>
<rect x="520" y="250" width="1" height="1" fill="#d8d8d8"/>
<rect x="580" y="250" width="1" height="1" fill="#d8d8d8"/>
<rect x="640" y="250" width="1" height="1" fill="#d8d8d8"/>
<rect x="700" y="250" width="1" height="1" fill="#d8d8d8"/>
<rect x="40" y="310" width="1" height="1" fill="#d8d8d8"/>
<rect x="100" y="310" width="1" height="1" fill="#d8d8d8"/>
<path d="M133.5 287.5L137.5 287.5" stroke="#fff"/>
<path d="M160.5 290.5L160.5 310.5" stroke="#fff"/>
<path d="M155.5 287.5L165.5 287.5L160.5 282.5Z" stroke="#44d444" fill="none"/>
<rect x="220" y="310" width="1" height="1" fill="#d8d8d8"/>
<path d="M253.5 283.5L253.5 291.5M257.5 283.5L253.5 287.5L257.5 291.5" stroke="#fff"/>
<rect x="260.5" y="290.5" width="39" height="39" fill="none" stroke="#fff"/>
<path d="M275.5 333.5L285.5 333.5L280.5 338.5Z" stroke="#44d444" fill="none"/>
<rect x="340" y="310" width="1" height="1" fill="#d8d8d8"/>
<rect x="400" y="310" width="1" height="1" fill="#d8d8d8"/>
<path d="M433.5 283.5L437.5 283.5M435.5 283.5L435.5 291.5M433.5 291.5L437.5 291.5" stroke="#fff"/>
<path d="M435.5 322.5L441.5 322.5L441.5 332.5L435.5 332.5L435.5 322.5M448.5 322.5L448.5 332.5" stroke="#e8b030"/>
<path d="M441 304h1v1h-1zM441 305h1v1h-1zM441 306h1v1h-1zM441 307h1v1h-1zM441 308h1v1h-1zM441 309h1v1h-1zM441 310h1v1h-1zM441 311h1v1h-1zM441 312h1v1h-1zM441 313h1v1h-1zM441 314h1v1h-1zM441 315h1v1h-1zM441 316h1v1h-1zM442 302h1v1h-1zM442 303h1v1h-1zM442 317h1v1h-1zM442 318h1v1h-1zM443 300h1v1h-1zM443 301h1v1h-1zM443 319h1v1h-1zM443 320h1v1h-1zM444 299h1v1h-1zM444 321h1v1h-1zM445 298h1v1h-1zM445 322h1v1h-1zM446 296h1v1h-1zM446 297h1v1h-1zM446 323h1v1h-1zM446 324h1v1h-1zM447 296h1v1h-1zM447 324h1v1h-1zM448 295h1v1h-1zM448 325h1v1h-1zM449 294h1v1h-1zM449 326h1v1h-1zM450 293h1v1h-1zM450 327h1v1h-1zM451 293h1v1h-1zM451 327h1v1h-1zM452 292h1v1h-1zM452 328h1v1h-1zM453 292h1v1h-1zM453 328h1v1h-1zM454 291h1v1h-1zM454 329h1v1h-1zM455 291h1v1h-1zM455 329h1v1h-1zM456 291h1v1h-1zM456 329h1v1h-1zM457 291h1v1h-1zM457 329h1v1h-1zM458 291h1v1h-1zM458 329h1v1h-1zM459 291h1v1h-1zM459 329h1v1h-1zM460 291h1v1h-1zM460 329h1v1h-1zM461 291h1v1h-1zM461 329h1v1h-1zM462 291h1v1h-1zM462 329h1v1h-1zM463 291h1v1h-1zM463 329h1v1h-1zM464 291h1v1h-1zM464 329h1v1h-1zM465 291h1v1h-1zM465 329h1v1h-1zM466 291h1v1h-1zM466 329h1v1h-1zM467 292h1v1h-1zM467 328h1v1h-1zM468 292h1v1h-1zM468 328h1v1h-1zM469 293h1v1h-1zM469 327h1v1h-1zM470 293h1v1h-1zM470 327h1v1h-1zM471 294h1v1h-1zM471 326h1v1h-1zM472 295h1v1h-1zM472 325h1v1h-1zM473 296h1v1h-1zM473 324h1v1h-1zM474 296h1v1h-1zM474 297h1v1h-1zM474 323h1v1h-1zM474 324h1v1h-1zM475 298h1v1h-1zM475 322h1v1h-1zM476 299h1v1h-1zM476 321h1v1h-1zM477 300h1v1h-1zM477 301h1v1h-1zM477 319h1v1h-1zM477 320h1v1h-1zM478 302h1v1h-1zM478 303h1v1h-1zM478 317h1v1h-1zM478 318h1v1h-1zM479 304h1v1h-1zM479 305h1v1h-1zM479 306h1v1h-1zM479 307h1v1h-1zM479 308h1v1h-1zM479 309h1v1h-1zM479 310h1v1h-1zM479 311h1v1h-1zM479 312h1v1h-1zM479 313h1v1h-1zM479 314h1v1h-1zM479 315h1v1h-1zM479 316h1v1h-1z" fill="#fff" stroke="none"/>
<path d="M451 306h1v1h-1zM451 307h1v1h-1zM451 308h1v1h-1zM451 309h1v1h-1zM451 310h1v1h-1zM451 311h1v1h-1zM451 312h1v1h-1zM451 313h1v1h-1zM451 314h1v1h-1zM452 305h1v1h-1zM452 315h1v1h-1zM453 304h1v1h-1zM453 316h1v1h-1zM454 303h1v1h-1zM454 317h1v1h-1zM455 302h1v1h-1zM455 318h1v1h-1zM456 301h1v1h-1zM456 319h1v1h-1zM457 301h1v1h-1zM457 319h1v1h-1zM458 301h1v1h-1zM458 319h1v1h-1zM459 301h1v1h-1zM459 319h1v1h-1zM460 301h1v1h-1zM460 319h1v1h-1zM461 301h1v1h-1zM461 319h1v1h-1zM462 301h1v1h-1zM462 319h1v1h-1zM463 301h1v1h-1zM463 319h1v1h-1zM464 301h1v1h-1zM464 319h1v1h-1zM465 302h1v1h-1zM465 318h1v1h-1zM466 303h1v1h-1zM466 317h1v1h-1zM467 304h1v1h-1zM467 316h1v1h-1zM468 305h1v1h-1zM468 315h1v1h-1zM469 306h1v1h-1zM469 307h1v1h-1zM469 308h1v1h-1zM469 309h1v1h-1zM469 310h1v1h-1zM469 311h1v1h-1zM469 312h1v1h-1zM469 313h1v1h-1zM469 314h1v1h-1z" fill="#fff" stroke="none"/>
<path d="M460.5 310.5L460.5 330.5" stroke="#fff"/>
<path d="M455.5 333.5L465.5 333.5L460.5 338.5Z" stroke="#44d444" fill="none"/>
<rect x="434" y="334" width="52" height="4" fill="#3a3a3a"/>
<rect x="520" y="310" width="1" height="1" fill="#d8d8d8"/>
<rect x="580" y="310" width="1" height="1" fill="#d8d8d8"/>
<rect x="640" y="310" width="1" height="1" fill="#d8d8d8"/>
<rect x="700" y="310" width="1" height="1" fill="#d8d8d8"/>
<rect x="40" y="370" width="1" height="1" fill="#d8d8d8"/>
<rect x="100" y="370" width="1" height="1" fill="#d8d8d8"/>
<path d="M133.5 347.5L137.5 347.5" stroke="#fff"/>
<path d="M160.5 350.5L160.5 370.5" stroke="#fff"/>
<path d="M155.5 347.5L165.5 347.5L160.5 342.5Z" stroke="#44d444" fill="none"/>
<rect x="220" y="370" width="1" height="1" fill="#d8d8d8"/>
<path d="M253.5 347.5L257.5 347.5" stroke="#fff"/>
<path d="M280.5 370.5L300.5 370.5" stroke="#fff"/>
<path d="M303.5 365.5L303.5 375.5L308.5 370.5Z" stroke="#44d444" fill="none"/>
<path d="M313.5 351.5L315.5 343.5L317.5 351.5M314.5 348.5L316.5 348.5" stroke="#fff"/>
<path d="M320.5 370.5L360.5 370.5" stroke="#fff"/>
<path d="M320.5 390.5L360.5 350.5" stroke="#fff"/>
<path d="M363.5 365.5L363.5 375.5L368.5 370.5Z" stroke="#44d444" fill="none"/>
<rect x="314" y="394" width="52" height="4" fill="#3a3a3a"/>
<path d="M377.5 343.5L373.5 343.5L373.5 351.5L377.5 351.5M373.5 347.5L375.5 347.5" stroke="#fff"/>
<path d="M380.5 370.5L420.5 370.5" stroke="#fff"/>
<path d="M380.5 350.5L420.5 390.5" stroke="#fff"/>
<path d="M423.5 365.5L423.5 375.5L428.5 370.5Z" stroke="#44d444" fill="none"/>
<rect x="374" y="394" width="52" height="4" fill="#3a3a3a"/>
<rect x="374" y="394" width="41" height="4" fill="#fff"/>
<path d="M433.5 351.5L435.5 343.5L437.5 351.5M434.5 348.5L436.5 348.5" stroke="#fff"/>
<rect x="440.5" y="350.5" width="39" height="39" fill="none" stroke="#fff"/>
<path d="M460.5 350.5L460.5 390.5" stroke="#fff"/>
<path d="M455.5 393.5L465.5 393.5L460.5 398.5Z" stroke="#44d444" fill="none"/>
<path d="M452.5 365.5L455.5 377.5L459.5 365.5M470.5 365.5L463.5 365.5L463.5 377.5L470.5 377.5M474.5 377.5L477.5 365.5L481.5 377.5M475.5 372.5L479.5 372.5" stroke="#fff"/>
<path d="M435.5 382.5L441.5 382.5L441.5 392.5L435.5 392.5L435.5 382.5M448.5 392.5h0M455.5 382.5L461.5 382.5L461.5 392.5L455.5 392.5L455.5 382.5M465.5 382.5L471.5 382.5L471.5 392.5L465.5 392.5L465.5 382.5" stroke="#f0f050"/>
<rect x="434" y="394" width="52" height="4" fill="#3a3a3a"/>
<rect x="520" y="370" width="1" height="1" fill="#d8d8d8"/>
<rect x="580" y="370" width="1" height="1" fill="#d8d8d8"/>
<rect x="640" y="370" width="1" height="1" fill="#d8d8d8"/>
<rect x="700" y="370" width="1" height="1" fill="#d8d8d8"/>
<rect x="40" y="430" width="1" height="1" fill="#d8d8d8"/>
<rect x="100" y="430" width="1" height="1" fill="#d8d8d8"/>
<path d="M133.5 407.5L137.5 407.5" stroke="#fff"/>
<path d="M160.5 410.5L160.5 430.5" stroke="#fff"/>
<path d="M155.5 407.5L165.5 407.5L160.5 402.5Z" stroke="#44d444" fill="none"/>
<rect x="220" y="430" width="1" height="1" fill="#d8d8d8"/>
<rect x="280" y="430" width="1" height="1" fill="#d8d8d8"/>
<rect x="340" y="430" width="1" height="1" fill="#d8d8d8"/>
<path d="M373.5 407.5L377.5 407.5" stroke="#fff"/>
<path d="M400.5 430.5L400.5 450.5" stroke="#fff"/>
<path d="M395.5 453.5L405.5 453.5L400.5 458.5Z" stroke="#44d444" fill="none"/>
<path d="M433.5 407.5L437.5 407.5" stroke="#fff"/>
<path d="M440.5 430.5L460.5 430.5" stroke="#fff"/>
<path d="M437.5 425.5L437.5 435.5L432.5 430.5Z" stroke="#44d444" fill="none"/>
<rect x="520" y="430" width="1" height="1" fill="#d8d8d8"/>
<rect x="580" y="430" width="1" height="1" fill="#d8d8d8"/>
<rect x="640" y="430" width="1" height="1" fill="#d8d8d8"/>
<rect x="700" y="430" width="1" height="1" fill="#d8d8d8"/>
<rect x="40" y="490" width="1" height="1" fill="#d8d8d8"/>
<rect x="100" y="490" width="1" height="1" fill="#d8d8d8"/>
<path d="M133.5 467.5L137.5 467.5" stroke="#fff"/>
<path d="M160.5 470.5L160.5 490.5" stroke="#fff"/>
<path d="M155.5 467.5L165.5 467.5L160.5 462.5Z" stroke="#44d444" fill="none"/>
<path d="M193.5 467.5L197.5 467.5" stroke="#fff"/>
<path d="M200.5 490.5L220.5 490.5" stroke="#fff"/>
<path d="M197.5 485.5L197.5 495.5L192.5 490.5Z" stroke="#44d444" fill="none"/>
<path d="M257.5 463.5L253.5 463.5L253.5 471.5L257.5 471.5M253.5 467.5L255.5 467.5" stroke="#fff"/>
<path d="M260.5 490.5L300.5 490.5" stroke="#fff"/>
<path d="M260.5 470.5L300.5 510.5" stroke="#fff"/>
<path d="M257.5 485.5L257.5 495.5L252.5 490.5Z" stroke="#44d444" fill="none"/>
<rect x="254" y="514" width="52" height="4" fill="#3a3a3a"/>
<rect x="254" y="514" width="12" height="4" fill="#fff"/>
<path d="M313.5 467.5L317.5 467.5" stroke="#fff"/>
<path d="M320.5 490.5L340.5 490.5" stroke="#fff"/>
<path d="M317.5 485.5L317.5 495.5L312.5 490.5Z" stroke="#44d444" fill="none"/>
<path d="M373.5 463.5L375.5 467.5L377.5 463.5M375.5 467.5L375.5 471.5" stroke="#fff"/>
<path d="M400.5 470.5L400.5 490.5" stroke="#fff"/>
<path d="M380.5 490.5L420.5 490.5" stroke="#fff"/>
<path d="M377.5 485.5L377.5 495.5L372.5 490.5Z" stroke="#44d444" fill="none"/>
<path d="M423.5 485.5L423.5 495.5L428.5 490.5Z" stroke="#44d444" fill="none"/>
<path d="M375.5 502.5L381.5 502.5L381.5 512.5L375.5 512.5L375.5 502.5M388.5 512.5h0M395.5 502.5L395.5 507.5L401.5 507.5M401.5 502.5L401.5 512.5" stroke="#44d444"/>
<rect x="374" y="514" width="52" height="4" fill="#3a3a3a"/>
<rect x="374" y="514" width="20" height="4" fill="#11ee11"/>
<path d="M433.5 467.5L437.5 467.5" stroke="#fff"/>
<path d="M460.5 490.5L460.5 510.5" stroke="#fff"/>
<path d="M455.5 513.5L465.5 513.5L460.5 518.5Z" stroke="#44d444" fill="none"/>
<rect x="520" y="490" width="1" height="1" fill="#d8d8d8"/>
<rect x="580" y="490" width="1" height="1" fill="#d8d8d8"/>
<rect x="640" y="490" width="1" height="1" fill="#d8d8d8"/>
<rect x="700" y="490" width="1" height="1" fill="#d8d8d8"/>
<rect x="40" y="550" width="1" height="1" fill="#d8d8d8"/>
<rect x="100" y="550" width="1" height="1" fill="#d8d8d8"/>
<rect x="160" y="550" width="1" height="1" fill="#d8d8d8"/>
<rect x="220" y="550" width="1" height="1" fill="#d8d8d8"/>
<rect x="280" y="550" width="1" height="1" fill="#d8d8d8"/>
<rect x="340" y="550" width="1" height="1" fill="#d8d8d8"/>
<path d="M373.5 527.5L377.5 527.5" stroke="#fff"/>
<path d="M400.5 550.5L400.5 570.5" stroke="#fff"/>
<path d="M395.5 573.5L405.5 573.5L400.5 578.5Z" stroke="#44d444" fill="none"/>
<path d="M433.5 527.5L437.5 527.5" stroke="#fff"/>
<path d="M440.5 550.5L460.5 550.5" stroke="#fff"/>
<path d="M437.5 545.5L437.5 555.5L432.5 550.5Z" stroke="#44d444" fill="none"/>
<rect x="520" y="550" width="1" height="1" fill="#d8d8d8"/>
<rect x="580" y="550" width="1" height="1" fill="#d8d8d8"/>
<rect x="640" y="550" width="1" height="1" fill="#d8d8d8"/>
<rect x="700" y="550" width="1" height="1" fill="#d8d8d8"/>
<rect x="40" y="610" width="1" height="1" fill="#d8d8d8"/>
<rect x="100" y="610" width="1" height="1" fill="#d8d8d8"/>
<rect x="160" y="610" width="1" height="1" fill="#d8d8d8"/>
<rect x="220" y="610" width="1" height="1" fill="#d8d8d8"/>
<rect x="280" y="610" width="1" height="1" fill="#d8d8d8"/>
<rect x="340" y="610" width="1" height="1" fill="#d8d8d8"/>
<path d="M373.5 587.5L377.5 587.5" stroke="#fff"/>
<path d="M400.5 610.5L400.5 630.5" stroke="#fff"/>
<path d="M395.5 633.5L405.5 633.5L400.5 638.5Z" stroke="#44d444" fill="none"/>
<rect x="460" y="610" width="1" height="1" fill="#d8d8d8"/>
<rect x="520" y="610" width="1" height="1" fill="#d8d8d8"/>
<rect x="580" y="610" width="1" height="1" fill="#d8d8d8"/>
<rect x="640" y="610" width="1" height="1" fill="#d8d8d8"/>
<rect x="700" y="610" width="1" height="1" fill="#d8d8d8"/>
<rect x="40" y="670" width="1" height="1" fill="#d8d8d8"/>
<rect x="100" y="670" width="1" height="1" fill="#d8d8d8"/>
<rect x="160" y="670" width="1" height="1" fill="#d8d8d8"/>
<rect x="220" y="670" width="1" height="1" fill="#d8d8d8"/>
<rect x="280" y="670" width="1" height="1" fill="#d8d8d8"/>
<rect x="340" y="670" width="1" height="1" fill="#d8d8d8"/>
<path d="M373.5 647.5L377.5 647.5" stroke="#fff"/>
<path d="M400.5 670.5L400.5 690.5" stroke="#fff"/>
<path d="M395.5 693.5L405.5 693.5L400.5 698.5Z" stroke="#44d444" fill="none"/>
<rect x="460" y="670" width="1" height="1" fill="#d8d8d8"/>
<rect x="520" y="670" width="1" height="1" fill="#d8d8d8"/>
<rect x="580" y="670" width="1" height="1" fill="#d8d8d8"/>
<rect x="640" y="670" width="1" height="1" fill="#d8d8d8"/>
<rect x="700" y="670" width="1" height="1" fill="#d8d8d8"/>
<rect x="40" y="730" width="1" height="1" fill="#d8d8d8"/>
<rect x="100" y="730" width="1" height="1" fill="#d8d8d8"/>
<rect x="160" y="730" width="1" height="1" fill="#d8d8d8"/>
<rect x="220" y="730" width="1" height="1" fill="#d8d8d8"/>
<rect x="280" y="730" width="1" height="1" fill="#d8d8d8"/>
<rect x="340" y="730" width="1" height="1" fill="#d8d8d8"/>
<path d="M377.5 703.5L373.5 703.5L373.5 707.5L377.5 707.5L377.5 711.5L373.5 711.5" stroke="#fff"/>
<rect x="380" y="710" width="40" height="40" fill="#ff0000"/>
<rect x="460" y="730" width="1" height="1" fill="#d8d8d8"/>
<rect x="520" y="730" width="1" height="1" fill="#d8d8d8"/>
<rect x="580" y="730" width="1" height="1" fill="#d8d8d8"/>
<rect x="640" y="730" width="1" height="1" fill="#d8d8d8"/>
<rect x="700" y="730" width="1" height="1" fill="#d8d8d8"/>
<clipPath id="cl"><rect x="10" y="40" width="300" height="720"/></clipPath>
<g clip-path="url(#cl)">
<path d="M279.5 65.5L272.5 65.5L272.5 77.5L279.5 77.5L279.5 71.5L275.5 71.5M283.5 71.5L290.5 71.5M294.5 65.5L301.5 65.5M297.5 65.5L297.5 77.5M294.5 77.5L301.5 77.5M305.5 77.5L305.5 65.5L312.5 77.5L312.5 65.5" stroke="#44d444"/>
<path d="M279.5 185.5L272.5 185.5L272.5 197.5L279.5 197.5L279.5 191.5L275.5 191.5M283.5 191.5L290.5 191.5M294.5 185.5L301.5 185.5M297.5 185.5L297.5 197.5M294.5 197.5L301.5 197.5M305.5 197.5L305.5 185.5L312.5 197.5L312.5 185.5" stroke="#44d444"/>
<path d="M279.5 305.5L272.5 305.5L272.5 317.5L279.5 317.5L279.5 311.5L275.5 311.5M283.5 311.5L290.5 311.5M294.5 305.5L301.5 305.5M297.5 305.5L297.5 317.5M294.5 317.5L301.5 317.5M305.5 317.5L305.5 305.5L312.5 317.5L312.5 305.5" stroke="#44d444"/>
</g>
<rect x="730" y="40" width="800" height="720" fill="#000"/>
<path d="M730 220.3L731 209.6L732 199.4L733 189.9L734 181.7L735 175.0L736 170.1L737 167.2L738 166.3L739 167.6L740 171.0L741 176.3L742 183.4L743 191.9L744 201.6L745 211.9L746 222.6L747 233.2L748 243.3L749 252.5L750 260.4L751 266.8L752 271.3L753 273.7L754 274.1L755 272.3L756 268.5L757 262.8L758 255.4L759 246.6L760 236.8L761 226.3L762 215.6L763 205.1L764 195.2L765 186.3L766 178.7L767 172.7L768 168.7L769 166.7L770 166.8L771 169.0L772 173.2L773 179.3L774 187.0L775 196.1L776 206.0L777 216.6L778 227.3L779 237.7L780 247.4L781 256.1L782 263.3L783 268.9L784 272.5L785 274.0L786 273.5L787 270.8L788 266.2L789 259.7L790 251.7L791 242.4L792 232.3L793 221.7L794 211.0L795 200.7L796 191.2L797 182.9L798 176.0L799 170.8L800 167.7L801 166.6L802 167.6L803 170.7L804 175.8L805 182.6L806 190.9L807 200.4L808 210.6L809 221.3L810 231.9L811 242.0L812 251.3L813 259.3L814 265.9L815 270.6L816 273.3L817 273.9L818 272.4L819 268.9L820 263.4L821 256.3L822 247.7L823 238.0L824 227.7L825 217.0L826 206.5L827 196.5L828 187.5L829 179.7L830 173.6L831 169.3L832 167.0L833 166.9L834 168.8L835 172.8L836 178.6L837 186.1L838 195.0L839 204.8L840 215.3L841 225.9L842 236.3L843 246.1L844 254.9L845 262.3L846 268.0L847 271.9L848 273.7L849 273.4L850 271.0L851 266.6L852 260.4L853 252.6L854 243.5L855 233.5L856 223.0L857 212.4L858 202.1L859 192.5L860 184.0L861 177.0L862 171.6L863 168.2L864 166.8L865 167.6L866 170.4L867 175.2L868 181.8L869 189.9L870 199.2L871 209.3L872 219.9L873 230.5L874 240.7L875 250.0L876 258.2L877 264.9L878 269.9L879 272.8L880 273.7L881 272.5L882 269.3L883 264.1L884 257.1L885 248.7L886 239.2L887 229.0L888 218.4L889 207.9L890 197.8L891 188.7L892 180.8L893 174.5L894 170.0L895 167.5L896 167.0L897 168.7L898 172.4L899 178.0L900 185.2L901 193.9L902 203.6L903 213.9L904 224.5L905 235.0L906 244.8L907 253.7L908 261.3L909 267.2L910 271.3L911 273.4L912 273.3L913 271.2L914 267.1L915 261.1L916 253.6L917 244.7L918 234.8L919 224.4L920 213.8L921 203.5L922 193.8L923 185.2L924 178.0L925 172.4L926 168.7L927 167.1L928 167.6L929 170.2L930 174.7L931 181.0L932 188.9L933 198.0L934 208.1L935 218.5L936 229.1L937 239.3L938 248.8L939 257.1L940 264.0L941 269.1L942 272.3L943 273.5L944 272.6L945 269.6L946 264.6L947 257.9L948 249.7L949 240.4L950 230.3L951 219.7L952 209.2L953 199.2L954 190.0L955 181.9L956 175.4L957 170.7L958 167.9L959 167.2L960 168.6L961 172.0L962 177.3L963 184.4L964 192.8L965 202.4L966 212.6L967 223.2L968 233.6L969 243.5L970 252.5L971 260.2L972 266.3L973 270.6L974 273.0L975 273.2L976 271.4L977 267.5L978 261.8L979 254.4L980 245.7L981 236.0L982 225.7L983 215.2L984 204.8L985 195.1L986 186.4L987 179.0L988 173.2L989 169.3L990 167.4L991 167.7L992 169.9L993 174.2L994 180.3L995 188.0L996 196.9L997 206.8L998 217.2L999 227.7L1000 238.0L1001 247.5L1002 255.9L1003 263.0L1004 268.3L1005 271.8L1006 273.2L1007 272.6L1008 269.8L1009 265.2L1010 258.7L1011 250.7L1012 241.6L1013 231.6L1014 221.1L1015 210.6L1016 200.5L1017 191.2L1018 183.0L1019 176.3L1020 171.4L1021 168.4L1022 167.4L1023 168.5L1024 171.7L1025 176.8L1026 183.6L1027 191.8L1028 201.2L1029 211.3L1030 221.8L1031 232.2L1032 242.2L1033 251.2L1034 259.1L1035 265.4L1036 270.0L1037 272.6L1038 273.1L1039 271.5L1040 267.9L1041 262.5L1042 255.3L1043 246.8L1044 237.2L1045 227.0L1046 216.5L1047 206.2L1048 196.4L1049 187.6L1050 180.0L1051 174.1L1052 169.9L1053 167.8L1054 167.7L1055 169.8L1056 173.8L1057 179.6L1058 187.1L1059 195.8L1060 205.6L1061 215.9L1062 226.4L1063 236.6L1064 246.2L1065 254.8L1066 262.0L1067 267.5L1068 271.2L1069 272.9L1070 272.5L1071 270.1L1072 265.7L1073 259.4L1074 251.7L1075 242.7L1076 232.8L1077 222.4L1078 212.0L1079 201.9L1080 192.5L1081 184.2L1082 177.3L1083 172.1L1084 168.9L1085 167.6L1086 168.5L1087 171.4L1088 176.2L1089 182.8L1090 190.8L1091 200.0L1092 210.0L1093 220.4L1094 230.9L1095 240.8L1096 250.0L1097 258.0L1098 264.5L1099 269.3L1100 272.1L1101 272.9L1102 271.6L1103 268.3L1104 263.1L1105 256.2L1106 247.8L1107 238.4L1108 228.3L1109 217.9L1110 207.5L1111 197.7L1112 188.8L1113 181.1L1114 174.9L1115 170.6L1116 168.2L1117 167.9L1118 169.6L1119 173.4L1120 179.0L1121 186.2L1122 194.8L1123 204.3L1124 214.6L1125 225.0L1126 235.2L1127 244.9L1128 253.6L1129 261.0L1130 266.7L1131 270.7L1132 272.6L1133 272.5L1134 270.3L1135 266.1L1136 260.1L1137 252.6L1138 243.8L1139 234.0L1140 223.8L1141 213.3L1142 203.2L1143 193.7L1144 185.3L1145 178.3L1146 172.9L1147 169.4L1148 167.9L1149 168.5L1150 171.1L1151 175.7L1152 182.0L1153 189.9L1154 198.9L1155 208.8L1156 219.1L1157 229.5L1158 239.5L1159 248.8L1160 256.9L1161 263.6L1162 268.6L1163 271.6L1164 272.7L1165 271.6L1166 268.6L1167 263.6L1168 257.0L1169 248.8L1170 239.6L1171 229.6L1172 219.2L1173 208.9L1174 199.0L1175 190.0L1176 182.2L1177 175.8L1178 171.3L1179 168.6L1180 168.0L1181 169.5L1182 173.0L1183 178.3L1184 185.3L1185 193.7L1186 203.2L1187 213.3L1188 223.6L1189 233.9L1190 243.6L1191 252.4L1192 259.9L1193 265.9L1194 270.0L1195 272.2L1196 272.4L1197 270.4L1198 266.5L1199 260.8L1200 253.5L1201 244.9L1202 235.3L1203 225.1L1204 214.7L1205 204.5L1206 195.0L1207 186.5L1208 179.3L1209 173.7L1210 170.0L1211 168.2L1212 168.5L1213 170.9L1214 175.2L1215 181.3L1216 188.9L1217 197.8L1218 207.5L1219 217.8L1220 228.1L1221 238.2L1222 247.5L1223 255.8L1224 262.6L1225 267.8L1226 271.1L1227 272.4L1228 271.7L1229 268.9L1230 264.2L1231 257.7L1232 249.8L1233 240.7L1234 230.8L1235 220.5L1236 210.2L1237 200.3L1238 191.2L1239 183.2L1240 176.7L1241 172.0L1242 169.1L1243 168.2L1244 169.4L1245 172.7L1246 177.7L1247 184.5L1248 192.7L1249 202.0L1250 212.0L1251 222.3L1252 232.6L1253 242.3L1254 251.2L1255 258.9L1256 265.0L1257 269.4L1258 271.8L1259 272.2L1260 270.6L1261 266.9L1262 261.5L1263 254.4L1264 245.9L1265 236.5L1266 226.4L1267 216.0L1268 205.9L1269 196.3L1270 187.7L1271 180.3L1272 174.5L1273 170.6L1274 168.6L1275 168.6L1276 170.7L1277 174.8L1278 180.6L1279 188.0L1280 196.7L1281 206.3L1282 216.5L1283 226.8L1284 236.9L1285 246.3L1286 254.6L1287 261.7L1288 267.0L1289 270.6L1290 272.1L1291 271.6L1292 269.1L1293 264.7L1294 258.5L1295 250.8L1296 241.8L1297 232.1L1298 221.9L1299 211.6L1300 201.6L1301 192.4L1302 184.4L1303 177.7L1304 172.7L1305 169.6L1306 168.5L1307 169.4L1308 172.4L1309 177.2L1310 183.7L1311 191.7L1312 200.8L1313 210.7L1314 221.0L1315 231.2L1316 241.0L1317 250.0L1318 257.8L1319 264.1L1320 268.7L1321 271.4L1322 272.0L1323 270.7L1324 267.3L1325 262.1L1326 255.2L1327 246.9L1328 237.6L1329 227.7L1330 217.4L1331 207.2L1332 197.6L1333 188.8L1334 181.3L1335 175.4L1336 171.2L1337 169.0L1338 168.7L1339 170.6L1340 174.3L1341 179.9L1342 187.1L1343 195.6L1344 205.1L1345 215.2L1346 225.5L1347 235.5L1348 245.0L1349 253.5L1350 260.7L1351 266.2L1352 270.0L1353 271.8L1354 271.6L1355 269.3L1356 265.1L1357 259.2L1358 251.7L1359 242.9L1360 233.3L1361 223.2L1362 212.9L1363 203.0L1364 193.7L1365 185.5L1366 178.6L1367 173.4L1368 170.1L1369 168.7L1370 169.4L1371 172.1L1372 176.7L1373 183.0L1374 190.8L1375 199.7L1376 209.5L1377 219.7L1378 229.9L1379 239.7L1380 248.8L1381 256.7L1382 263.2L1383 268.0L1384 270.9L1385 271.8L1386 270.7L1387 267.6L1388 262.6L1389 256.0L1390 247.9L1391 238.8L1392 228.9L1393 218.7L1394 208.6L1395 198.9L1396 190.0L1397 182.4L1398 176.3L1399 171.8L1400 169.4L1401 168.9L1402 170.4L1403 174.0L1404 179.3L1405 186.3L1406 194.6L1407 203.9L1408 213.9L1409 224.1L1410 234.2L1411 243.7L1412 252.3L1413 259.6L1414 265.4L1415 269.4L1416 271.5L1417 271.5L1418 269.5L1419 265.6L1420 259.8L1421 252.6L1422 244.0L1423 234.5L1424 224.5L1425 214.3L1426 204.3L1427 194.9L1428 186.6L1429 179.6L1430 174.2L1431 170.6L1432 169.0L1433 169.4L1434 171.9L1435 176.2L1436 182.3L1437 189.8L1438 198.6L1439 208.3L1440 218.4L1441 228.5L1442 238.4L1443 247.5L1444 255.6L1445 262.3L1446 267.3L1447 270.4L1448 271.6L1449 270.7L1450 267.9L1451 263.2L1452 256.8L1453 248.9L1454 239.9L1455 230.2L1456 220.0L1457 209.9L1458 200.2L1459 191.2L1460 183.5L1461 177.1L1462 172.5L1463 169.8L1464 169.1L1465 170.4L1466 173.6L1467 178.7L1468 185.5L1469 193.6L1470 202.8L1471 212.6L1472 222.8L1473 232.9L1474 242.4L1475 251.1L1476 258.6L1477 264.6L1478 268.8L1479 271.1L1480 271.4L1481 269.6L1482 266.0L1483 260.5L1484 253.4L1485 245.0L1486 235.7L1487 225.7L1488 215.6L1489 205.6L1490 196.2L1491 187.8L1492 180.6L1493 175.0L1494 171.2L1495 169.4L1496 169.5L1497 171.7L1498 175.7L1499 181.6L1500 188.9L1501 197.5L1502 207.0L1503 217.1L1504 227.2L1505 237.1L1506 246.3L1507 254.5L1508 261.3L1509 266.5L1510 269.9L1511 271.3L1512 270.7L1513 268.2L1514 263.7L1515 257.5L1516 249.8L1517 241.0L1518 231.4L1519 221.3L1520 211.2L1521 201.5L1522 192.5L1523 184.5L1524 178.1L1525 173.2L1526 170.3L1527 169.3L1528 170.3L1529 173.3L1530 178.2" stroke="#55d055" stroke-linecap="butt" />
<rect x="980" y="420" width="100" height="30" fill="#787878"/>
<rect x="980.5" y="420.5" width="99" height="29" fill="none" stroke="#c8c8c8"/>
<path d="M997.5 441.5L997.5 429.5L1004.5 429.5L1004.5 435.5L997.5 435.5M998.5 436.5L1004.5 441.5M1008.5 441.5L1011.5 429.5L1015.5 441.5M1009.5 436.5L1013.5 436.5M1019.5 441.5L1019.5 429.5L1026.5 441.5L1026.5 429.5M1030.5 429.5L1030.5 441.5L1034.5 441.5L1037.5 435.5L1034.5 429.5L1030.5 429.5M1041.5 429.5L1048.5 429.5L1048.5 441.5L1041.5 441.5L1041.5 429.5M1052.5 441.5L1052.5 429.5L1055.5 435.5L1059.5 429.5L1059.5 441.5" stroke="#fff"/>
<rect x="1090" y="420" width="80" height="30" fill="#787878"/>
<rect x="1090.5" y="420.5" width="79" height="29" fill="none" stroke="#c8c8c8"/>
<path d="M1109.5 429.5L1102.5 429.5L1102.5 441.5L1109.5 441.5M1113.5 429.5L1113.5 441.5L1120.5 441.5M1131.5 429.5L1124.5 429.5L1124.5 441.5L1131.5 441.5M1124.5 435.5L1127.5 435.5M1135.5 441.5L1138.5 429.5L1142.5 441.5M1136.5 436.5L1140.5 436.5M1146.5 441.5L1146.5 429.5L1153.5 429.5L1153.5 435.5L1146.5 435.5M1147.5 436.5L1153.5 441.5" stroke="#fff"/>
<rect x="1180" y="420" width="80" height="30" fill="#787878"/>
<rect x="1180.5" y="420.5" width="79" height="29" fill="none" stroke="#c8c8c8"/>
<path d="M1181.5 441.5L1181.5 429.5L1188.5 429.5L1188.5 435.5L1181.5 435.5M1192.5 441.5L1192.5 429.5L1199.5 429.5L1199.5 435.5L1192.5 435.5M1193.5 436.5L1199.5 441.5M1210.5 429.5L1203.5 429.5L1203.5 441.5L1210.5 441.5M1203.5 435.5L1206.5 435.5M1221.5 429.5L1214.5 429.5L1214.5 435.5L1221.5 435.5L1221.5 441.5L1214.5 441.5M1232.5 429.5L1225.5 429.5L1225.5 441.5L1232.5 441.5M1225.5 435.5L1228.5 435.5M1236.5 429.5L1243.5 429.5M1239.5 429.5L1239.5 441.5M1247.5 435.5L1254.5 435.5M1250.5 429.5L1250.5 441.5" stroke="#fff"/>
<rect x="1030" y="475" width="100" height="30" fill="#787878"/>
<rect x="1030.5" y="475.5" width="99" height="29" fill="none" stroke="#c8c8c8"/>
<path d="M1054.5 484.5L1047.5 484.5L1047.5 496.5L1054.5 496.5M1047.5 490.5L1050.5 490.5M1058.5 484.5L1065.5 496.5M1065.5 484.5L1058.5 496.5M1069.5 496.5L1069.5 484.5L1076.5 484.5L1076.5 490.5L1069.5 490.5M1080.5 484.5L1087.5 484.5L1087.5 496.5L1080.5 496.5L1080.5 484.5M1091.5 496.5L1091.5 484.5L1098.5 484.5L1098.5 490.5L1091.5 490.5M1092.5 491.5L1098.5 496.5M1102.5 484.5L1109.5 484.5M1105.5 484.5L1105.5 496.5" stroke="#fff"/>
<rect x="1140" y="475" width="100" height="30" fill="#787878"/>
<rect x="1140.5" y="475.5" width="99" height="29" fill="none" stroke="#c8c8c8"/>
<path d="M1157.5 484.5L1164.5 484.5M1160.5 484.5L1160.5 496.5M1157.5 496.5L1164.5 496.5M1168.5 496.5L1168.5 484.5L1171.5 490.5L1175.5 484.5L1175.5 496.5M1179.5 496.5L1179.5 484.5L1186.5 484.5L1186.5 490.5L1179.5 490.5M1190.5 484.5L1197.5 484.5L1197.5 496.5L1190.5 496.5L1190.5 484.5M1201.5 496.5L1201.5 484.5L1208.5 484.5L1208.5 490.5L1201.5 490.5M1202.5 491.5L1208.5 496.5M1212.5 484.5L1219.5 484.5M1215.5 484.5L1215.5 496.5" stroke="#fff"/>
<rect x="1000" y="575" width="80" height="30" fill="#787878"/>
<rect x="1000.5" y="575.5" width="79" height="29" fill="none" stroke="#c8c8c8"/>
<path d="M1025.5 584.5L1018.5 584.5L1018.5 590.5L1025.5 590.5L1025.5 596.5L1018.5 596.5M1029.5 596.5L1032.5 584.5L1036.5 596.5M1030.5 591.5L1034.5 591.5M1040.5 584.5L1043.5 596.5L1047.5 584.5M1058.5 584.5L1051.5 584.5L1051.5 596.5L1058.5 596.5M1051.5 590.5L1054.5 590.5" stroke="#fff"/>
<rect x="1180" y="575" width="80" height="30" fill="#787878"/>
<rect x="1180.5" y="575.5" width="79" height="29" fill="none" stroke="#c8c8c8"/>
<path d="M1198.5 584.5L1198.5 596.5L1205.5 596.5M1209.5 584.5L1216.5 584.5L1216.5 596.5L1209.5 596.5L1209.5 584.5M1220.5 596.5L1223.5 584.5L1227.5 596.5M1221.5 591.5L1225.5 591.5M1231.5 584.5L1231.5 596.5L1235.5 596.5L1238.5 590.5L1235.5 584.5L1231.5 584.5" stroke="#fff"/>
<path d="M791 482h1v1h-1zM791 483h1v1h-1zM791 484h1v1h-1zM791 485h1v1h-1zM791 486h1v1h-1zM791 487h1v1h-1zM791 488h1v1h-1zM791 489h1v1h-1zM791 490h1v1h-1zM791 491h1v1h-1zM791 492h1v1h-1zM791 493h1v1h-1zM791 494h1v1h-1zM791 495h1v1h-1zM791 496h1v1h-1zM791 497h1v1h-1zM791 498h1v1h-1zM792 478h1v1h-1zM792 479h1v1h-1zM792 480h1v1h-1zM792 481h1v1h-1zM792 499h1v1h-1zM792 500h1v1h-1zM792 501h1v1h-1zM792 502h1v1h-1zM793 476h1v1h-1zM793 477h1v1h-1zM793 503h1v1h-1zM793 504h1v1h-1zM794 473h1v1h-1zM794 474h1v1h-1zM794 475h1v1h-1zM794 505h1v1h-1zM794 506h1v1h-1zM794 507h1v1h-1zM795 471h1v1h-1zM795 472h1v1h-1zM795 508h1v1h-1zM795 509h1v1h-1zM796 470h1v1h-1zM796 510h1v1h-1zM797 468h1v1h-1zM797 469h1v1h-1zM797 511h1v1h-1zM797 512h1v1h-1zM798 467h1v1h-1zM798 513h1v1h-1zM799 465h1v1h-1zM799 466h1v1h-1zM799 514h1v1h-1zM799 515h1v1h-1zM800 464h1v1h-1zM800 516h1v1h-1zM801 463h1v1h-1zM801 517h1v1h-1zM802 462h1v1h-1zM802 518h1v1h-1zM803 461h1v1h-1zM803 519h1v1h-1zM804 460h1v1h-1zM804 520h1v1h-1zM805 459h1v1h-1zM805 521h1v1h-1zM806 459h1v1h-1zM806 521h1v1h-1zM807 458h1v1h-1zM807 522h1v1h-1zM808 457h1v1h-1zM808 523h1v1h-1zM809 457h1v1h-1zM809 523h1v1h-1zM810 456h1v1h-1zM810 524h1v1h-1zM811 455h1v1h-1zM811 525h1v1h-1zM812 455h1v1h-1zM812 525h1v1h-1zM813 454h1v1h-1zM813 526h1v1h-1zM814 454h1v1h-1zM814 526h1v1h-1zM815 454h1v1h-1zM815 526h1v1h-1zM816 453h1v1h-1zM816 527h1v1h-1zM817 453h1v1h-1zM817 527h1v1h-1zM818 452h1v1h-1zM818 528h1v1h-1zM819 452h1v1h-1zM819 528h1v1h-1zM820 452h1v1h-1zM820 528h1v1h-1zM821 452h1v1h-1zM821 528h1v1h-1zM822 451h1v1h-1zM822 529h1v1h-1zM823 451h1v1h-1zM823 529h1v1h-1zM824 451h1v1h-1zM824 529h1v1h-1zM825 451h1v1h-1zM825 529h1v1h-1zM826 451h1v1h-1zM826 529h1v1h-1zM827 451h1v1h-1zM827 529h1v1h-1zM828 451h1v1h-1zM828 529h1v1h-1zM829 451h1v1h-1zM829 529h1v1h-1zM830 451h1v1h-1zM830 529h1v1h-1zM831 451h1v1h-1zM831 529h1v1h-1zM832 451h1v1h-1zM832 529h1v1h-1zM833 451h1v1h-1zM833 529h1v1h-1zM834 451h1v1h-1zM834 529h1v1h-1zM835 451h1v1h-1zM835 529h1v1h-1zM836 451h1v1h-1zM836 529h1v1h-1zM837 451h1v1h-1zM837 529h1v1h-1zM838 451h1v1h-1zM838 529h1v1h-1zM839 452h1v1h-1zM839 528h1v1h-1zM840 452h1v1h-1zM840 528h1v1h-1zM841 452h1v1h-1zM841 528h1v1h-1zM842 452h1v1h-1zM842 528h1v1h-1zM843 453h1v1h-1zM843 527h1v1h-1zM844 453h1v1h-1zM844 527h1v1h-1zM845 454h1v1h-1zM845 526h1v1h-1zM846 454h1v1h-1zM846 526h1v1h-1zM847 454h1v1h-1zM847 526h1v1h-1zM848 455h1v1h-1zM848 525h1v1h-1zM849 455h1v1h-1zM849 525h1v1h-1zM850 456h1v1h-1zM850 524h1v1h-1zM851 457h1v1h-1zM851 523h1v1h-1zM852 457h1v1h-1zM852 523h1v1h-1zM853 458h1v1h-1zM853 522h1v1h-1zM854 459h1v1h-1zM854 521h1v1h-1zM855 459h1v1h-1zM855 521h1v1h-1zM856 460h1v1h-1zM856 520h1v1h-1zM857 461h1v1h-1zM857 519h1v1h-1zM858 462h1v1h-1zM858 518h1v1h-1zM859 463h1v1h-1zM859 517h1v1h-1zM860 464h1v1h-1zM860 516h1v1h-1zM861 465h1v1h-1zM861 466h1v1h-1zM861 514h1v1h-1zM861 515h1v1h-1zM862 467h1v1h-1zM862 513h1v1h-1zM863 468h1v1h-1zM863 469h1v1h-1zM863 511h1v1h-1zM863 512h1v1h-1zM864 470h1v1h-1zM864 510h1v1h-1zM865 471h1v1h-1zM865 472h1v1h-1zM865 508h1v1h-1zM865 509h1v1h-1zM866 473h1v1h-1zM866 474h1v1h-1zM866 475h1v1h-1zM866 505h1v1h-1zM866 506h1v1h-1zM866 507h1v1h-1zM867 476h1v1h-1zM867 477h1v1h-1zM867 503h1v1h-1zM867 504h1v1h-1zM868 478h1v1h-1zM868 479h1v1h-1zM868 480h1v1h-1zM868 481h1v1h-1zM868 499h1v1h-1zM868 500h1v1h-1zM868 501h1v1h-1zM868 502h1v1h-1zM869 482h1v1h-1zM869 483h1v1h-1zM869 484h1v1h-1zM869 485h1v1h-1zM869 486h1v1h-1zM869 487h1v1h-1zM869 488h1v1h-1zM869 489h1v1h-1zM869 490h1v1h-1zM869 491h1v1h-1zM869 492h1v1h-1zM869 493h1v1h-1zM869 494h1v1h-1zM869 495h1v1h-1zM869 496h1v1h-1zM869 497h1v1h-1zM869 498h1v1h-1z" fill="#787878" stroke="none"/>
<path d="M792 482h1v1h-1zM792 483h1v1h-1zM792 484h1v1h-1zM792 485h1v1h-1zM792 486h1v1h-1zM792 487h1v1h-1zM792 488h1v1h-1zM792 489h1v1h-1zM792 490h1v1h-1zM792 491h1v1h-1zM792 492h1v1h-1zM792 493h1v1h-1zM792 494h1v1h-1zM792 495h1v1h-1zM792 496h1v1h-1zM792 497h1v1h-1zM792 498h1v1h-1zM793 478h1v1h-1zM793 479h1v1h-1zM793 480h1v1h-1zM793 481h1v1h-1zM793 499h1v1h-1zM793 500h1v1h-1zM793 501h1v1h-1zM793 502h1v1h-1zM794 476h1v1h-1zM794 477h1v1h-1zM794 503h1v1h-1zM794 504h1v1h-1zM795 474h1v1h-1zM795 475h1v1h-1zM795 505h1v1h-1zM795 506h1v1h-1zM796 472h1v1h-1zM796 473h1v1h-1zM796 507h1v1h-1zM796 508h1v1h-1zM797 470h1v1h-1zM797 471h1v1h-1zM797 509h1v1h-1zM797 510h1v1h-1zM798 468h1v1h-1zM798 469h1v1h-1zM798 511h1v1h-1zM798 512h1v1h-1zM799 467h1v1h-1zM799 513h1v1h-1zM800 466h1v1h-1zM800 514h1v1h-1zM801 465h1v1h-1zM801 515h1v1h-1zM802 464h1v1h-1zM802 516h1v1h-1zM803 463h1v1h-1zM803 517h1v1h-1zM804 462h1v1h-1zM804 518h1v1h-1zM805 461h1v1h-1zM805 519h1v1h-1zM806 460h1v1h-1zM806 520h1v1h-1zM807 459h1v1h-1zM807 521h1v1h-1zM808 458h1v1h-1zM808 522h1v1h-1zM809 458h1v1h-1zM809 522h1v1h-1zM810 457h1v1h-1zM810 523h1v1h-1zM811 457h1v1h-1zM811 523h1v1h-1zM812 456h1v1h-1zM812 524h1v1h-1zM813 456h1v1h-1zM813 524h1v1h-1zM814 455h1v1h-1zM814 525h1v1h-1zM815 455h1v1h-1zM815 525h1v1h-1zM816 454h1v1h-1zM816 526h1v1h-1zM817 454h1v1h-1zM817 526h1v1h-1zM818 453h1v1h-1zM818 527h1v1h-1zM819 453h1v1h-1zM819 527h1v1h-1zM820 453h1v1h-1zM820 527h1v1h-1zM821 453h1v1h-1zM821 527h1v1h-1zM822 452h1v1h-1zM822 528h1v1h-1zM823 452h1v1h-1zM823 528h1v1h-1zM824 452h1v1h-1zM824 528h1v1h-1zM825 452h1v1h-1zM825 528h1v1h-1zM826 452h1v1h-1zM826 528h1v1h-1zM827 452h1v1h-1zM827 528h1v1h-1zM828 452h1v1h-1zM828 528h1v1h-1zM829 452h1v1h-1zM829 528h1v1h-1zM830 452h1v1h-1zM830 528h1v1h-1zM831 452h1v1h-1zM831 528h1v1h-1zM832 452h1v1h-1zM832 528h1v1h-1zM833 452h1v1h-1zM833 528h1v1h-1zM834 452h1v1h-1zM834 528h1v1h-1zM835 452h1v1h-1zM835 528h1v1h-1zM836 452h1v1h-1zM836 528h1v1h-1zM837 452h1v1h-1zM837 528h1v1h-1zM838 452h1v1h-1zM838 528h1v1h-1zM839 453h1v1h-1zM839 527h1v1h-1zM840 453h1v1h-1zM840 527h1v1h-1zM841 453h1v1h-1zM841 527h1v1h-1zM842 453h1v1h-1zM842 527h1v1h-1zM843 454h1v1h-1zM843 526h1v1h-1zM844 454h1v1h-1zM844 526h1v1h-1zM845 455h1v1h-1zM845 525h1v1h-1zM846 455h1v1h-1zM846 525h1v1h-1zM847 456h1v1h-1zM847 524h1v1h-1zM848 456h1v1h-1zM848 524h1v1h-1zM849 457h1v1h-1zM849 523h1v1h-1zM850 457h1v1h-1zM850 523h1v1h-1zM851 458h1v1h-1zM851 522h1v1h-1zM852 458h1v1h-1zM852 522h1v1h-1zM853 459h1v1h-1zM853 521h1v1h-1zM854 460h1v1h-1zM854 520h1v1h-1zM855 461h1v1h-1zM855 519h1v1h-1zM856 462h1v1h-1zM856 518h1v1h-1zM857 463h1v1h-1zM857 517h1v1h-1zM858 464h1v1h-1zM858 516h1v1h-1zM859 465h1v1h-1zM859 515h1v1h-1zM860 466h1v1h-1zM860 514h1v1h-1zM861 467h1v1h-1zM861 513h1v1h-1zM862 468h1v1h-1zM862 469h1v1h-1zM862 511h1v1h-1zM862 512h1v1h-1zM863 470h1v1h-1zM863 471h1v1h-1zM863 509h1v1h-1zM863 510h1v1h-1zM864 472h1v1h-1zM864 473h1v1h-1zM864 507h1v1h-1zM864 508h1v1h-1zM865 474h1v1h-1zM865 475h1v1h-1zM865 505h1v1h-1zM865 506h1v1h-1zM866 476h1v1h-1zM866 477h1v1h-1zM866 503h1v1h-1zM866 504h1v1h-1zM867 478h1v1h-1zM867 479h1v1h-1zM867 480h1v1h-1zM867 481h1v1h-1zM867 499h1v1h-1zM867 500h1v1h-1zM867 501h1v1h-1zM867 502h1v1h-1zM868 482h1v1h-1zM868 483h1v1h-1zM868 484h1v1h-1zM868 485h1v1h-1zM868 486h1v1h-1zM868 487h1v1h-1zM868 488h1v1h-1zM868 489h1v1h-1zM868 490h1v1h-1zM868 491h1v1h-1zM868 492h1v1h-1zM868 493h1v1h-1zM868 494h1v1h-1zM868 495h1v1h-1zM868 496h1v1h-1zM868 497h1v1h-1zM868 498h1v1h-1z" fill="#787878" stroke="none"/>
<path d="M830.5 490.5L830.5 451.5" stroke="#fff"/>
<path d="M1391 482h1v1h-1zM1391 483h1v1h-1zM1391 484h1v1h-1zM1391 485h1v1h-1zM1391 486h1v1h-1zM1391 487h1v1h-1zM1391 488h1v1h-1zM1391 489h1v1h-1zM1391 490h1v1h-1zM1391 491h1v1h-1zM1391 492h1v1h-1zM1391 493h1v1h-1zM1391 494h1v1h-1zM1391 495h1v1h-1zM1391 496h1v1h-1zM1391 497h1v1h-1zM1391 498h1v1h-1zM1392 478h1v1h-1zM1392 479h1v1h-1zM1392 480h1v1h-1zM1392 481h1v1h-1zM1392 499h1v1h-1zM1392 500h1v1h-1zM1392 501h1v1h-1zM1392 502h1v1h-1zM1393 476h1v1h-1zM1393 477h1v1h-1zM1393 503h1v1h-1zM1393 504h1v1h-1zM1394 473h1v1h-1zM1394 474h1v1h-1zM1394 475h1v1h-1zM1394 505h1v1h-1zM1394 506h1v1h-1zM1394 507h1v1h-1zM1395 471h1v1h-1zM1395 472h1v1h-1zM1395 508h1v1h-1zM1395 509h1v1h-1zM1396 470h1v1h-1zM1396 510h1v1h-1zM1397 468h1v1h-1zM1397 469h1v1h-1zM1397 511h1v1h-1zM1397 512h1v1h-1zM1398 467h1v1h-1zM1398 513h1v1h-1zM1399 465h1v1h-1zM1399 466h1v1h-1zM1399 514h1v1h-1zM1399 515h1v1h-1zM1400 464h1v1h-1zM1400 516h1v1h-1zM1401 463h1v1h-1zM1401 517h1v1h-1zM1402 462h1v1h-1zM1402 518h1v1h-1zM1403 461h1v1h-1zM1403 519h1v1h-1zM1404 460h1v1h-1zM1404 520h1v1h-1zM1405 459h1v1h-1zM1405 521h1v1h-1zM1406 459h1v1h-1zM1406 521h1v1h-1zM1407 458h1v1h-1zM1407 522h1v1h-1zM1408 457h1v1h-1zM1408 523h1v1h-1zM1409 457h1v1h-1zM1409 523h1v1h-1zM1410 456h1v1h-1zM1410 524h1v1h-1zM1411 455h1v1h-1zM1411 525h1v1h-1zM1412 455h1v1h-1zM1412 525h1v1h-1zM1413 454h1v1h-1zM1413 526h1v1h-1zM1414 454h1v1h-1zM1414 526h1v1h-1zM1415 454h1v1h-1zM1415 526h1v1h-1zM1416 453h1v1h-1zM1416 527h1v1h-1zM1417 453h1v1h-1zM1417 527h1v1h-1zM1418 452h1v1h-1zM1418 528h1v1h-1zM1419 452h1v1h-1zM1419 528h1v1h-1zM1420 452h1v1h-1zM1420 528h1v1h-1zM1421 452h1v1h-1zM1421 528h1v1h-1zM1422 451h1v1h-1zM1422 529h1v1h-1zM1423 451h1v1h-1zM1423 529h1v1h-1zM1424 451h1v1h-1zM1424 529h1v1h-1zM1425 451h1v1h-1zM1425 529h1v1h-1zM1426 451h1v1h-1zM1426 529h1v1h-1zM1427 451h1v1h-1zM1427 529h1v1h-1zM1428 451h1v1h-1zM1428 529h1v1h-1zM1429 451h1v1h-1zM1429 529h1v1h-1zM1430 451h1v1h-1zM1430 529h1v1h-1zM1431 451h1v1h-1zM1431 529h1v1h-1zM1432 451h1v1h-1zM1432 529h1v1h-1zM1433 451h1v1h-1zM1433 529h1v1h-1zM1434 451h1v1h-1zM1434 529h1v1h-1zM1435 451h1v1h-1zM1435 529h1v1h-1zM1436 451h1v1h-1zM1436 529h1v1h-1zM1437 451h1v1h-1zM1437 529h1v1h-1zM1438 451h1v1h-1zM1438 529h1v1h-1zM1439 452h1v1h-1zM1439 528h1v1h-1zM1440 452h1v1h-1zM1440 528h1v1h-1zM1441 452h1v1h-1zM1441 528h1v1h-1zM1442 452h1v1h-1zM1442 528h1v1h-1zM1443 453h1v1h-1zM1443 527h1v1h-1zM1444 453h1v1h-1zM1444 527h1v1h-1zM1445 454h1v1h-1zM1445 526h1v1h-1zM1446 454h1v1h-1zM1446 526h1v1h-1zM1447 454h1v1h-1zM1447 526h1v1h-1zM1448 455h1v1h-1zM1448 525h1v1h-1zM1449 455h1v1h-1zM1449 525h1v1h-1zM1450 456h1v1h-1zM1450 524h1v1h-1zM1451 457h1v1h-1zM1451 523h1v1h-1zM1452 457h1v1h-1zM1452 523h1v1h-1zM1453 458h1v1h-1zM1453 522h1v1h-1zM1454 459h1v1h-1zM1454 521h1v1h-1zM1455 459h1v1h-1zM1455 521h1v1h-1zM1456 460h1v1h-1zM1456 520h1v1h-1zM1457 461h1v1h-1zM1457 519h1v1h-1zM1458 462h1v1h-1zM1458 518h1v1h-1zM1459 463h1v1h-1zM1459 517h1v1h-1zM1460 464h1v1h-1zM1460 516h1v1h-1zM1461 465h1v1h-1zM1461 466h1v1h-1zM1461 514h1v1h-1zM1461 515h1v1h-1zM1462 467h1v1h-1zM1462 513h1v1h-1zM1463 468h1v1h-1zM1463 469h1v1h-1zM1463 511h1v1h-1zM1463 512h1v1h-1zM1464 470h1v1h-1zM1464 510h1v1h-1zM1465 471h1v1h-1zM1465 472h1v1h-1zM1465 508h1v1h-1zM1465 509h1v1h-1zM1466 473h1v1h-1zM1466 474h1v1h-1zM1466 475h1v1h-1zM1466 505h1v1h-1zM1466 506h1v1h-1zM1466 507h1v1h-1zM1467 476h1v1h-1zM1467 477h1v1h-1zM1467 503h1v1h-1zM1467 504h1v1h-1zM1468 478h1v1h-1zM1468 479h1v1h-1zM1468 480h1v1h-1zM1468 481h1v1h-1zM1468 499h1v1h-1zM1468 500h1v1h-1zM1468 501h1v1h-1zM1468 502h1v1h-1zM1469 482h1v1h-1zM1469 483h1v1h-1zM1469 484h1v1h-1zM1469 485h1v1h-1zM1469 486h1v1h-1zM1469 487h1v1h-1zM1469 488h1v1h-1zM1469 489h1v1h-1zM1469 490h1v1h-1zM1469 491h1v1h-1zM1469 492h1v1h-1zM1469 493h1v1h-1zM1469 494h1v1h-1zM1469 495h1v1h-1zM1469 496h1v1h-1zM1469 497h1v1h-1zM1469 498h1v1h-1z" fill="#787878" stroke="none"/>
<path d="M1392 482h1v1h-1zM1392 483h1v1h-1zM1392 484h1v1h-1zM1392 485h1v1h-1zM1392 486h1v1h-1zM1392 487h1v1h-1zM1392 488h1v1h-1zM1392 489h1v1h-1zM1392 490h1v1h-1zM1392 491h1v1h-1zM1392 492h1v1h-1zM1392 493h1v1h-1zM1392 494h1v1h-1zM1392 495h1v1h-1zM1392 496h1v1h-1zM1392 497h1v1h-1zM1392 498h1v1h-1zM1393 478h1v1h-1zM1393 479h1v1h-1zM1393 480h1v1h-1zM1393 481h1v1h-1zM1393 499h1v1h-1zM1393 500h1v1h-1zM1393 501h1v1h-1zM1393 502h1v1h-1zM1394 476h1v1h-1zM1394 477h1v1h-1zM1394 503h1v1h-1zM1394 504h1v1h-1zM1395 474h1v1h-1zM1395 475h1v1h-1zM1395 505h1v1h-1zM1395 506h1v1h-1zM1396 472h1v1h-1zM1396 473h1v1h-1zM1396 507h1v1h-1zM1396 508h1v1h-1zM1397 470h1v1h-1zM1397 471h1v1h-1zM1397 509h1v1h-1zM1397 510h1v1h-1zM1398 468h1v1h-1zM1398 469h1v1h-1zM1398 511h1v1h-1zM1398 512h1v1h-1zM1399 467h1v1h-1zM1399 513h1v1h-1zM1400 466h1v1h-1zM1400 514h1v1h-1zM1401 465h1v1h-1zM1401 515h1v1h-1zM1402 464h1v1h-1zM1402 516h1v1h-1zM1403 463h1v1h-1zM1403 517h1v1h-1zM1404 462h1v1h-1zM1404 518h1v1h-1zM1405 461h1v1h-1zM1405 519h1v1h-1zM1406 460h1v1h-1zM1406 520h1v1h-1zM1407 459h1v1h-1zM1407 521h1v1h-1zM1408 458h1v1h-1zM1408 522h1v1h-1zM1409 458h1v1h-1zM1409 522h1v1h-1zM1410 457h1v1h-1zM1410 523h1v1h-1zM1411 457h1v1h-1zM1411 523h1v1h-1zM1412 456h1v1h-1zM1412 524h1v1h-1zM1413 456h1v1h-1zM1413 524h1v1h-1zM1414 455h1v1h-1zM1414 525h1v1h-1zM1415 455h1v1h-1zM1415 525h1v1h-1zM1416 454h1v1h-1zM1416 526h1v1h-1zM1417 454h1v1h-1zM1417 526h1v1h-1zM1418 453h1v1h-1zM1418 527h1v1h-1zM1419 453h1v1h-1zM1419 527h1v1h-1zM1420 453h1v1h-1zM1420 527h1v1h-1zM1421 453h1v1h-1zM1421 527h1v1h-1zM1422 452h1v1h-1zM1422 528h1v1h-1zM1423 452h1v1h-1zM1423 528h1v1h-1zM1424 452h1v1h-1zM1424 528h1v1h-1zM1425 452h1v1h-1zM1425 528h1v1h-1zM1426 452h1v1h-1zM1426 528h1v1h-1zM1427 452h1v1h-1zM1427 528h1v1h-1zM1428 452h1v1h-1zM1428 528h1v1h-1zM1429 452h1v1h-1zM1429 528h1v1h-1zM1430 452h1v1h-1zM1430 528h1v1h-1zM1431 452h1v1h-1zM1431 528h1v1h-1zM1432 452h1v1h-1zM1432 528h1v1h-1zM1433 452h1v1h-1zM1433 528h1v1h-1zM1434 452h1v1h-1zM1434 528h1v1h-1zM1435 452h1v1h-1zM1435 528h1v1h-1zM1436 452h1v1h-1zM1436 528h1v1h-1zM1437 452h1v1h-1zM1437 528h1v1h-1zM1438 452h1v1h-1zM1438 528h1v1h-1zM1439 453h1v1h-1zM1439 527h1v1h-1zM1440 453h1v1h-1zM1440 527h1v1h-1zM1441 453h1v1h-1zM1441 527h1v1h-1zM1442 453h1v1h-1zM1442 527h1v1h-1zM1443 454h1v1h-1zM1443 526h1v1h-1zM1444 454h1v1h-1zM1444 526h1v1h-1zM1445 455h1v1h-1zM1445 525h1v1h-1zM1446 455h1v1h-1zM1446 525h1v1h-1zM1447 456h1v1h-1zM1447 524h1v1h-1zM1448 456h1v1h-1zM1448 524h1v1h-1zM1449 457h1v1h-1zM1449 523h1v1h-1zM1450 457h1v1h-1zM1450 523h1v1h-1zM1451 458h1v1h-1zM1451 522h1v1h-1zM1452 458h1v1h-1zM1452 522h1v1h-1zM1453 459h1v1h-1zM1453 521h1v1h-1zM1454 460h1v1h-1zM1454 520h1v1h-1zM1455 461h1v1h-1zM1455 519h1v1h-1zM1456 462h1v1h-1zM1456 518h1v1h-1zM1457 463h1v1h-1zM1457 517h1v1h-1zM1458 464h1v1h-1zM1458 516h1v1h-1zM1459 465h1v1h-1zM1459 515h1v1h-1zM1460 466h1v1h-1zM1460 514h1v1h-1zM1461 467h1v1h-1zM1461 513h1v1h-1zM1462 468h1v1h-1zM1462 469h1v1h-1zM1462 511h1v1h-1zM1462 512h1v1h-1zM1463 470h1v1h-1zM1463 471h1v1h-1zM1463 509h1v1h-1zM1463 510h1v1h-1zM1464 472h1v1h-1zM1464 473h1v1h-1zM1464 507h1v1h-1zM1464 508h1v1h-1zM1465 474h1v1h-1zM1465 475h1v1h-1zM1465 505h1v1h-1zM1465 506h1v1h-1zM1466 476h1v1h-1zM1466 477h1v1h-1zM1466 503h1v1h-1zM1466 504h1v1h-1zM1467 478h1v1h-1zM1467 479h1v1h-1zM1467 480h1v1h-1zM1467 481h1v1h-1zM1467 499h1v1h-1zM1467 500h1v1h-1zM1467 501h1v1h-1zM1467 502h1v1h-1zM1468 482h1v1h-1zM1468 483h1v1h-1zM1468 484h1v1h-1zM1468 485h1v1h-1zM1468 486h1v1h-1zM1468 487h1v1h-1zM1468 488h1v1h-1zM1468 489h1v1h-1zM1468 490h1v1h-1zM1468 491h1v1h-1zM1468 492h1v1h-1zM1468 493h1v1h-1zM1468 494h1v1h-1zM1468 495h1v1h-1zM1468 496h1v1h-1zM1468 497h1v1h-1zM1468 498h1v1h-1z" fill="#787878" stroke="none"/>
<path d="M1430.5 490.5L1430.5 451.5" stroke="#fff"/>
<path d="M1091 582h1v1h-1zM1091 583h1v1h-1zM1091 584h1v1h-1zM1091 585h1v1h-1zM1091 586h1v1h-1zM1091 587h1v1h-1zM1091 588h1v1h-1zM1091 589h1v1h-1zM1091 590h1v1h-1zM1091 591h1v1h-1zM1091 592h1v1h-1zM1091 593h1v1h-1zM1091 594h1v1h-1zM1091 595h1v1h-1zM1091 596h1v1h-1zM1091 597h1v1h-1zM1091 598h1v1h-1zM1092 578h1v1h-1zM1092 579h1v1h-1zM1092 580h1v1h-1zM1092 581h1v1h-1zM1092 599h1v1h-1zM1092 600h1v1h-1zM1092 601h1v1h-1zM1092 602h1v1h-1zM1093 576h1v1h-1zM1093 577h1v1h-1zM1093 603h1v1h-1zM1093 604h1v1h-1zM1094 573h1v1h-1zM1094 574h1v1h-1zM1094 575h1v1h-1zM1094 605h1v1h-1zM1094 606h1v1h-1zM1094 607h1v1h-1zM1095 571h1v1h-1zM1095 572h1v1h-1zM1095 608h1v1h-1zM1095 609h1v1h-1zM1096 570h1v1h-1zM1096 610h1v1h-1zM1097 568h1v1h-1zM1097 569h1v1h-1zM1097 611h1v1h-1zM1097 612h1v1h-1zM1098 567h1v1h-1zM1098 613h1v1h-1zM1099 565h1v1h-1zM1099 566h1v1h-1zM1099 614h1v1h-1zM1099 615h1v1h-1zM1100 564h1v1h-1zM1100 616h1v1h-1zM1101 563h1v1h-1zM1101 617h1v1h-1zM1102 562h1v1h-1zM1102 618h1v1h-1zM1103 561h1v1h-1zM1103 619h1v1h-1zM1104 560h1v1h-1zM1104 620h1v1h-1zM1105 559h1v1h-1zM1105 621h1v1h-1zM1106 559h1v1h-1zM1106 621h1v1h-1zM1107 558h1v1h-1zM1107 622h1v1h-1zM1108 557h1v1h-1zM1108 623h1v1h-1zM1109 557h1v1h-1zM1109 623h1v1h-1zM1110 556h1v1h-1zM1110 624h1v1h-1zM1111 555h1v1h-1zM1111 625h1v1h-1zM1112 555h1v1h-1zM1112 625h1v1h-1zM1113 554h1v1h-1zM1113 626h1v1h-1zM1114 554h1v1h-1zM1114 626h1v1h-1zM1115 554h1v1h-1zM1115 626h1v1h-1zM1116 553h1v1h-1zM1116 627h1v1h-1zM1117 553h1v1h-1zM1117 627h1v1h-1zM1118 552h1v1h-1zM1118 628h1v1h-1zM1119 552h1v1h-1zM1119 628h1v1h-1zM1120 552h1v1h-1zM1120 628h1v1h-1zM1121 552h1v1h-1zM1121 628h1v1h-1zM1122 551h1v1h-1zM1122 629h1v1h-1zM1123 551h1v1h-1zM1123 629h1v1h-1zM1124 551h1v1h-1zM1124 629h1v1h-1zM1125 551h1v1h-1zM1125 629h1v1h-1zM1126 551h1v1h-1zM1126 629h1v1h-1zM1127 551h1v1h-1zM1127 629h1v1h-1zM1128 551h1v1h-1zM1128 629h1v1h-1zM1129 551h1v1h-1zM1129 629h1v1h-1zM1130 551h1v1h-1zM1130 629h1v1h-1zM1131 551h1v1h-1zM1131 629h1v1h-1zM1132 551h1v1h-1zM1132 629h1v1h-1zM1133 551h1v1h-1zM1133 629h1v1h-1zM1134 551h1v1h-1zM1134 629h1v1h-1zM1135 551h1v1h-1zM1135 629h1v1h-1zM1136 551h1v1h-1zM1136 629h1v1h-1zM1137 551h1v1h-1zM1137 629h1v1h-1zM1138 551h1v1h-1zM1138 629h1v1h-1zM1139 552h1v1h-1zM1139 628h1v1h-1zM1140 552h1v1h-1zM1140 628h1v1h-1zM1141 552h1v1h-1zM1141 628h1v1h-1zM1142 552h1v1h-1zM1142 628h1v1h-1zM1143 553h1v1h-1zM1143 627h1v1h-1zM1144 553h1v1h-1zM1144 627h1v1h-1zM1145 554h1v1h-1zM1145 626h1v1h-1zM1146 554h1v1h-1zM1146 626h1v1h-1zM1147 554h1v1h-1zM1147 626h1v1h-1zM1148 555h1v1h-1zM1148 625h1v1h-1zM1149 555h1v1h-1zM1149 625h1v1h-1zM1150 556h1v1h-1zM1150 624h1v1h-1zM1151 557h1v1h-1zM1151 623h1v1h-1zM1152 557h1v1h-1zM1152 623h1v1h-1zM1153 558h1v1h-1zM1153 622h1v1h-1zM1154 559h1v1h-1zM1154 621h1v1h-1zM1155 559h1v1h-1zM1155 621h1v1h-1zM1156 560h1v1h-1zM1156 620h1v1h-1zM1157 561h1v1h-1zM1157 619h1v1h-1zM1158 562h1v1h-1zM1158 618h1v1h-1zM1159 563h1v1h-1zM1159 617h1v1h-1zM1160 564h1v1h-1zM1160 616h1v1h-1zM1161 565h1v1h-1zM1161 566h1v1h-1zM1161 614h1v1h-1zM1161 615h1v1h-1zM1162 567h1v1h-1zM1162 613h1v1h-1zM1163 568h1v1h-1zM1163 569h1v1h-1zM1163 611h1v1h-1zM1163 612h1v1h-1zM1164 570h1v1h-1zM1164 610h1v1h-1zM1165 571h1v1h-1zM1165 572h1v1h-1zM1165 608h1v1h-1zM1165 609h1v1h-1zM1166 573h1v1h-1zM1166 574h1v1h-1zM1166 575h1v1h-1zM1166 605h1v1h-1zM1166 606h1v1h-1zM1166 607h1v1h-1zM1167 576h1v1h-1zM1167 577h1v1h-1zM1167 603h1v1h-1zM1167 604h1v1h-1zM1168 578h1v1h-1zM1168 579h1v1h-1zM1168 580h1v1h-1zM1168 581h1v1h-1zM1168 599h1v1h-1zM1168 600h1v1h-1zM1168 601h1v1h-1zM1168 602h1v1h-1zM1169 582h1v1h-1zM1169 583h1v1h-1zM1169 584h1v1h-1zM1169 585h1v1h-1zM1169 586h1v1h-1zM1169 587h1v1h-1zM1169 588h1v1h-1zM1169 589h1v1h-1zM1169 590h1v1h-1zM1169 591h1v1h-1zM1169 592h1v1h-1zM1169 593h1v1h-1zM1169 594h1v1h-1zM1169 595h1v1h-1zM1169 596h1v1h-1zM1169 597h1v1h-1zM1169 598h1v1h-1z" fill="#787878" stroke="none"/>
<path d="M1092 582h1v1h-1zM1092 583h1v1h-1zM1092 584h1v1h-1zM1092 585h1v1h-1zM1092 586h1v1h-1zM1092 587h1v1h-1zM1092 588h1v1h-1zM1092 589h1v1h-1zM1092 590h1v1h-1zM1092 591h1v1h-1zM1092 592h1v1h-1zM1092 593h1v1h-1zM1092 594h1v1h-1zM1092 595h1v1h-1zM1092 596h1v1h-1zM1092 597h1v1h-1zM1092 598h1v1h-1zM1093 578h1v1h-1zM1093 579h1v1h-1zM1093 580h1v1h-1zM1093 581h1v1h-1zM1093 599h1v1h-1zM1093 600h1v1h-1zM1093 601h1v1h-1zM1093 602h1v1h-1zM1094 576h1v1h-1zM1094 577h1v1h-1zM1094 603h1v1h-1zM1094 604h1v1h-1zM1095 574h1v1h-1zM1095 575h1v1h-1zM1095 605h1v1h-1zM1095 606h1v1h-1zM1096 572h1v1h-1zM1096 573h1v1h-1zM1096 607h1v1h-1zM1096 608h1v1h-1zM1097 570h1v1h-1zM1097 571h1v1h-1zM1097 609h1v1h-1zM1097 610h1v1h-1zM1098 568h1v1h-1zM1098 569h1v1h-1zM1098 611h1v1h-1zM1098 612h1v1h-1zM1099 567h1v1h-1zM1099 613h1v1h-1zM1100 566h1v1h-1zM1100 614h1v1h-1zM1101 565h1v1h-1zM1101 615h1v1h-1zM1102 564h1v1h-1zM1102 616h1v1h-1zM1103 563h1v1h-1zM1103 617h1v1h-1zM1104 562h1v1h-1zM1104 618h1v1h-1zM1105 561h1v1h-1zM1105 619h1v1h-1zM1106 560h1v1h-1zM1106 620h1v1h-1zM1107 559h1v1h-1zM1107 621h1v1h-1zM1108 558h1v1h-1zM1108 622h1v1h-1zM1109 558h1v1h-1zM1109 622h1v1h-1zM1110 557h1v1h-1zM1110 623h1v1h-1zM1111 557h1v1h-1zM1111 623h1v1h-1zM1112 556h1v1h-1zM1112 624h1v1h-1zM1113 556h1v1h-1zM1113 624h1v1h-1zM1114 555h1v1h-1zM1114 625h1v1h-1zM1115 555h1v1h-1zM1115 625h1v1h-1zM1116 554h1v1h-1zM1116 626h1v1h-1zM1117 554h1v1h-1zM1117 626h1v1h-1zM1118 553h1v1h-1zM1118 627h1v1h-1zM1119 553h1v1h-1zM1119 627h1v1h-1zM1120 553h1v1h-1zM1120 627h1v1h-1zM1121 553h1v1h-1zM1121 627h1v1h-1zM1122 552h1v1h-1zM1122 628h1v1h-1zM1123 552h1v1h-1zM1123 628h1v1h-1zM1124 552h1v1h-1zM1124 628h1v1h-1zM1125 552h1v1h-1zM1125 628h1v1h-1zM1126 552h1v1h-1zM1126 628h1v1h-1zM1127 552h1v1h-1zM1127 628h1v1h-1zM1128 552h1v1h-1zM1128 628h1v1h-1zM1129 552h1v1h-1zM1129 628h1v1h-1zM1130 552h1v1h-1zM1130 628h1v1h-1zM1131 552h1v1h-1zM1131 628h1v1h-1zM1132 552h1v1h-1zM1132 628h1v1h-1zM1133 552h1v1h-1zM1133 628h1v1h-1zM1134 552h1v1h-1zM1134 628h1v1h-1zM1135 552h1v1h-1zM1135 628h1v1h-1zM1136 552h1v1h-1zM1136 628h1v1h-1zM1137 552h1v1h-1zM1137 628h1v1h-1zM1138 552h1v1h-1zM1138 628h1v1h-1zM1139 553h1v1h-1zM1139 627h1v1h-1zM1140 553h1v1h-1zM1140 627h1v1h-1zM1141 553h1v1h-1zM1141 627h1v1h-1zM1142 553h1v1h-1zM1142 627h1v1h-1zM1143 554h1v1h-1zM1143 626h1v1h-1zM1144 554h1v1h-1zM1144 626h1v1h-1zM1145 555h1v1h-1zM1145 625h1v1h-1zM1146 555h1v1h-1zM1146 625h1v1h-1zM1147 556h1v1h-1zM1147 624h1v1h-1zM1148 556h1v1h-1zM1148 624h1v1h-1zM1149 557h1v1h-1zM1149 623h1v1h-1zM1150 557h1v1h-1zM1150 623h1v1h-1zM1151 558h1v1h-1zM1151 622h1v1h-1zM1152 558h1v1h-1zM1152 622h1v1h-1zM1153 559h1v1h-1zM1153 621h1v1h-1zM1154 560h1v1h-1zM1154 620h1v1h-1zM1155 561h1v1h-1zM1155 619h1v1h-1zM1156 562h1v1h-1zM1156 618h1v1h-1zM1157 563h1v1h-1zM1157 617h1v1h-1zM1158 564h1v1h-1zM1158 616h1v1h-1zM1159 565h1v1h-1zM1159 615h1v1h-1zM1160 566h1v1h-1zM1160 614h1v1h-1zM1161 567h1v1h-1zM1161 613h1v1h-1zM1162 568h1v1h-1zM1162 569h1v1h-1zM1162 611h1v1h-1zM1162 612h1v1h-1zM1163 570h1v1h-1zM1163 571h1v1h-1zM1163 609h1v1h-1zM1163 610h1v1h-1zM1164 572h1v1h-1zM1164 573h1v1h-1zM1164 607h1v1h-1zM1164 608h1v1h-1zM1165 574h1v1h-1zM1165 575h1v1h-1zM1165 605h1v1h-1zM1165 606h1v1h-1zM1166 576h1v1h-1zM1166 577h1v1h-1zM1166 603h1v1h-1zM1166 604h1v1h-1zM1167 578h1v1h-1zM1167 579h1v1h-1zM1167 580h1v1h-1zM1167 581h1v1h-1zM1167 599h1v1h-1zM1167 600h1v1h-1zM1167 601h1v1h-1zM1167 602h1v1h-1zM1168 582h1v1h-1zM1168 583h1v1h-1zM1168 584h1v1h-1zM1168 585h1v1h-1zM1168 586h1v1h-1zM1168 587h1v1h-1zM1168 588h1v1h-1zM1168 589h1v1h-1zM1168 590h1v1h-1zM1168 591h1v1h-1zM1168 592h1v1h-1zM1168 593h1v1h-1zM1168 594h1v1h-1zM1168 595h1v1h-1zM1168 596h1v1h-1zM1168 597h1v1h-1zM1168 598h1v1h-1z" fill="#787878" stroke="none"/>
<path d="M1130.5 590.5L1093.5 594.5" stroke="#fff"/>
<path d="M1117.5 640.5L1110.5 640.5L1110.5 646.5L1117.5 646.5L1117.5 652.5L1110.5 652.5M1121.5 640.5L1121.5 652.5L1128.5 652.5M1132.5 640.5L1139.5 640.5L1139.5 652.5L1132.5 652.5L1132.5 640.5M1143.5 640.5L1150.5 640.5M1146.5 640.5L1146.5 652.5M1168.5 640.5L1168.5 652.5" stroke="#fff"/>
<rect x="1295.5" y="475.5" width="29" height="29" fill="none" stroke="#7f7f7f"/>
<path d="M1303.5 499.5L1303.5 483.5L1310.5 498.5L1318.5 483.5L1318.5 499.5" stroke="#fff" shape-rendering="auto" stroke-linecap="butt"/>
<path d="M780.5 600.5L780.5 612.5L784.5 612.5L787.5 609.5L784.5 606.5L787.5 603.5L784.5 600.5L780.5 600.5M780.5 606.5L784.5 606.5M791.5 600.5L791.5 612.5L798.5 612.5L798.5 600.5M809.5 600.5L802.5 600.5L802.5 612.5M802.5 606.5L805.5 606.5M820.5 600.5L813.5 600.5L813.5 612.5M813.5 606.5L816.5 606.5M831.5 600.5L824.5 600.5L824.5 612.5L831.5 612.5M824.5 606.5L827.5 606.5M835.5 612.5L835.5 600.5L842.5 600.5L842.5 606.5L835.5 606.5M836.5 607.5L842.5 612.5" stroke="#fff"/>
<rect x="780" y="620" width="60" height="60" fill="#1f1f1f"/>
<rect x="780.5" y="620.5" width="59" height="59" fill="none" stroke="#6a6a6a"/>
<rect x="810" y="650" width="1" height="1" fill="#d8d8d8"/>
<path d="M857.5 630.5L850.5 630.5L850.5 642.5L857.5 642.5M861.5 636.5L868.5 636.5M879.5 630.5L872.5 630.5L872.5 642.5L879.5 642.5M883.5 630.5L890.5 630.5L890.5 642.5L883.5 642.5L883.5 630.5M894.5 642.5L894.5 630.5L901.5 630.5L901.5 636.5L894.5 636.5M905.5 630.5L908.5 636.5L912.5 630.5M908.5 636.5L908.5 642.5" stroke="#fff"/>
<path d="M850.5 650.5L853.5 662.5L857.5 650.5M861.5 656.5L868.5 656.5M872.5 662.5L872.5 650.5L879.5 650.5L879.5 656.5L872.5 656.5M883.5 662.5L886.5 650.5L890.5 662.5M884.5 657.5L888.5 657.5M901.5 650.5L894.5 650.5L894.5 656.5L901.5 656.5L901.5 662.5L894.5 662.5M905.5 650.5L912.5 650.5M908.5 650.5L908.5 662.5M923.5 650.5L916.5 650.5L916.5 662.5L923.5 662.5M916.5 656.5L919.5 656.5" stroke="#fff"/>
<path d="M793.5 685.5L793.5 697.5" stroke="#fff"/>
<rect x="780" y="700" width="45" height="45" fill="#1f1f1f"/>
<rect x="780.5" y="700.5" width="44" height="44" fill="none" stroke="#6a6a6a"/>
<path d="M845.5 685.5L852.5 685.5L852.5 691.5L845.5 691.5L845.5 697.5L852.5 697.5" stroke="#fff"/>
<rect x="835" y="700" width="45" height="45" fill="#1f1f1f"/>
<rect x="835.5" y="700.5" width="44" height="44" fill="none" stroke="#6a6a6a"/>
<path d="M900.5 685.5L907.5 685.5L907.5 697.5L900.5 697.5M900.5 691.5L907.5 691.5" stroke="#fff"/>
<rect x="890" y="700" width="45" height="45" fill="#1f1f1f"/>
<rect x="890.5" y="700.5" width="44" height="44" fill="none" stroke="#6a6a6a"/>
<path d="M955.5 685.5L955.5 691.5L962.5 691.5M962.5 685.5L962.5 697.5" stroke="#fff"/>
<rect x="945" y="700" width="45" height="45" fill="#1f1f1f"/>
<rect x="945.5" y="700.5" width="44" height="44" fill="none" stroke="#6a6a6a"/>
<path d="M1017.5 685.5L1010.5 685.5L1010.5 691.5L1017.5 691.5L1017.5 697.5L1010.5 697.5" stroke="#fff"/>
<rect x="1000" y="700" width="45" height="45" fill="#1f1f1f"/>
<rect x="1000.5" y="700.5" width="44" height="44" fill="none" stroke="#6a6a6a"/>
<path d="M1072.5 685.5L1065.5 685.5L1065.5 697.5L1072.5 697.5L1072.5 691.5L1065.5 691.5" stroke="#fff"/>
<rect x="1055" y="700" width="45" height="45" fill="#1f1f1f"/>
<rect x="1055.5" y="700.5" width="44" height="44" fill="none" stroke="#6a6a6a"/>
<path d="M1120.5 685.5L1127.5 685.5L1121.5 697.5" stroke="#fff"/>
<rect x="1110" y="700" width="45" height="45" fill="#1f1f1f"/>
<rect x="1110.5" y="700.5" width="44" height="44" fill="none" stroke="#6a6a6a"/>
<path d="M1175.5 685.5L1182.5 685.5L1182.5 697.5L1175.5 697.5L1175.5 685.5M1175.5 691.5L1182.5 691.5" stroke="#fff"/>
<rect x="1165" y="700" width="45" height="45" fill="#1f1f1f"/>
<rect x="1165.5" y="700.5" width="44" height="44" fill="none" stroke="#6a6a6a"/>
<path d="M1237.5 691.5L1230.5 691.5L1230.5 685.5L1237.5 685.5L1237.5 697.5" stroke="#fff"/>
<rect x="1220" y="700" width="45" height="45" fill="#1f1f1f"/>
<rect x="1220.5" y="700.5" width="44" height="44" fill="none" stroke="#6a6a6a"/>
<path d="M1285.5 685.5L1292.5 685.5L1292.5 697.5L1285.5 697.5L1285.5 685.5" stroke="#fff"/>
<rect x="1275" y="700" width="45" height="45" fill="#1f1f1f"/>
<rect x="1275.5" y="700.5" width="44" height="44" fill="none" stroke="#6a6a6a"/>
<path d="M783.5 707.5L787.5 707.5" stroke="#fff"/>
<path d="M802.5 708.5L802.5 722.5" stroke="#fff"/>
<path d="M797.5 707.5L807.5 707.5L802.5 702.5Z" stroke="#44d444"/>
<path d="M838.5 703.5L842.5 703.5L842.5 711.5L838.5 711.5L838.5 703.5" stroke="#fff"/>
<path d="M846.5 727.5L840.5 727.5L840.5 732.5L846.5 732.5L846.5 737.5L840.5 737.5M850.5 727.5L856.5 727.5L856.5 737.5L850.5 737.5L850.5 727.5M866.5 727.5L860.5 727.5L860.5 732.5L866.5 732.5L866.5 737.5L860.5 737.5" stroke="#40e0f0"/>
<path d="M843 718h1v1h-1zM843 719h1v1h-1zM843 720h1v1h-1zM843 721h1v1h-1zM843 722h1v1h-1zM843 723h1v1h-1zM843 724h1v1h-1zM843 725h1v1h-1zM843 726h1v1h-1zM844 716h1v1h-1zM844 717h1v1h-1zM844 727h1v1h-1zM844 728h1v1h-1zM845 714h1v1h-1zM845 715h1v1h-1zM845 729h1v1h-1zM845 730h1v1h-1zM846 713h1v1h-1zM846 731h1v1h-1zM847 712h1v1h-1zM847 732h1v1h-1zM848 711h1v1h-1zM848 733h1v1h-1zM849 710h1v1h-1zM849 734h1v1h-1zM850 710h1v1h-1zM850 734h1v1h-1zM851 709h1v1h-1zM851 735h1v1h-1zM852 709h1v1h-1zM852 735h1v1h-1zM853 708h1v1h-1zM853 736h1v1h-1zM854 708h1v1h-1zM854 736h1v1h-1zM855 708h1v1h-1zM855 736h1v1h-1zM856 708h1v1h-1zM856 736h1v1h-1zM857 708h1v1h-1zM857 736h1v1h-1zM858 708h1v1h-1zM858 736h1v1h-1zM859 708h1v1h-1zM859 736h1v1h-1zM860 708h1v1h-1zM860 736h1v1h-1zM861 708h1v1h-1zM861 736h1v1h-1zM862 709h1v1h-1zM862 735h1v1h-1zM863 709h1v1h-1zM863 735h1v1h-1zM864 710h1v1h-1zM864 734h1v1h-1zM865 710h1v1h-1zM865 734h1v1h-1zM866 711h1v1h-1zM866 733h1v1h-1zM867 712h1v1h-1zM867 732h1v1h-1zM868 713h1v1h-1zM868 731h1v1h-1zM869 714h1v1h-1zM869 715h1v1h-1zM869 729h1v1h-1zM869 730h1v1h-1zM870 716h1v1h-1zM870 717h1v1h-1zM870 727h1v1h-1zM870 728h1v1h-1zM871 718h1v1h-1zM871 719h1v1h-1zM871 720h1v1h-1zM871 721h1v1h-1zM871 722h1v1h-1zM871 723h1v1h-1zM871 724h1v1h-1zM871 725h1v1h-1zM871 726h1v1h-1z" fill="#fff" stroke="none"/>
<path d="M857.5 708.5L857.5 722.5" stroke="#fff"/>
<path d="M852.5 707.5L862.5 707.5L857.5 702.5Z" stroke="#44d444"/>
<rect x="839" y="739" width="37" height="4" fill="#3a3a3a"/>
<rect x="839" y="739" width="18" height="4" fill="#30e0f0"/>
<path d="M893.5 703.5L897.5 703.5M895.5 703.5L895.5 711.5M893.5 711.5L897.5 711.5" stroke="#fff"/>
<path d="M895.5 727.5L901.5 727.5L901.5 737.5L895.5 737.5L895.5 727.5M905.5 727.5L911.5 727.5L911.5 737.5L905.5 737.5M905.5 732.5L911.5 732.5" stroke="#e8b030"/>
<path d="M898 718h1v1h-1zM898 719h1v1h-1zM898 720h1v1h-1zM898 721h1v1h-1zM898 722h1v1h-1zM898 723h1v1h-1zM898 724h1v1h-1zM898 725h1v1h-1zM898 726h1v1h-1zM899 716h1v1h-1zM899 717h1v1h-1zM899 727h1v1h-1zM899 728h1v1h-1zM900 714h1v1h-1zM900 715h1v1h-1zM900 729h1v1h-1zM900 730h1v1h-1zM901 713h1v1h-1zM901 731h1v1h-1zM902 712h1v1h-1zM902 732h1v1h-1zM903 711h1v1h-1zM903 733h1v1h-1zM904 710h1v1h-1zM904 734h1v1h-1zM905 710h1v1h-1zM905 734h1v1h-1zM906 709h1v1h-1zM906 735h1v1h-1zM907 709h1v1h-1zM907 735h1v1h-1zM908 708h1v1h-1zM908 736h1v1h-1zM909 708h1v1h-1zM909 736h1v1h-1zM910 708h1v1h-1zM910 736h1v1h-1zM911 708h1v1h-1zM911 736h1v1h-1zM912 708h1v1h-1zM912 736h1v1h-1zM913 708h1v1h-1zM913 736h1v1h-1zM914 708h1v1h-1zM914 736h1v1h-1zM915 708h1v1h-1zM915 736h1v1h-1zM916 708h1v1h-1zM916 736h1v1h-1zM917 709h1v1h-1zM917 735h1v1h-1zM918 709h1v1h-1zM918 735h1v1h-1zM919 710h1v1h-1zM919 734h1v1h-1zM920 710h1v1h-1zM920 734h1v1h-1zM921 711h1v1h-1zM921 733h1v1h-1zM922 712h1v1h-1zM922 732h1v1h-1zM923 713h1v1h-1zM923 731h1v1h-1zM924 714h1v1h-1zM924 715h1v1h-1zM924 729h1v1h-1zM924 730h1v1h-1zM925 716h1v1h-1zM925 717h1v1h-1zM925 727h1v1h-1zM925 728h1v1h-1zM926 718h1v1h-1zM926 719h1v1h-1zM926 720h1v1h-1zM926 721h1v1h-1zM926 722h1v1h-1zM926 723h1v1h-1zM926 724h1v1h-1zM926 725h1v1h-1zM926 726h1v1h-1z" fill="#fff" stroke="none"/>
<path d="M906 720h1v1h-1zM906 721h1v1h-1zM906 722h1v1h-1zM906 723h1v1h-1zM906 724h1v1h-1zM906 725h1v1h-1zM907 719h1v1h-1zM907 726h1v1h-1zM908 718h1v1h-1zM908 727h1v1h-1zM909 717h1v1h-1zM909 728h1v1h-1zM910 716h1v1h-1zM910 729h1v1h-1zM911 716h1v1h-1zM911 729h1v1h-1zM912 716h1v1h-1zM912 729h1v1h-1zM913 716h1v1h-1zM913 729h1v1h-1zM914 716h1v1h-1zM914 729h1v1h-1zM915 716h1v1h-1zM915 729h1v1h-1zM916 717h1v1h-1zM916 728h1v1h-1zM917 718h1v1h-1zM917 727h1v1h-1zM918 719h1v1h-1zM918 726h1v1h-1zM919 720h1v1h-1zM919 721h1v1h-1zM919 722h1v1h-1zM919 723h1v1h-1zM919 724h1v1h-1zM919 725h1v1h-1z" fill="#fff" stroke="none"/>
<path d="M912.5 708.5L912.5 722.5" stroke="#fff"/>
<path d="M907.5 707.5L917.5 707.5L912.5 702.5Z" stroke="#44d444"/>
<rect x="894" y="739" width="37" height="4" fill="#3a3a3a"/>
<rect x="894" y="739" width="18" height="4" fill="#f5b800"/>
<path d="M948.5 703.5L948.5 711.5M952.5 703.5L948.5 707.5L952.5 711.5" stroke="#fff"/>
<rect x="952.5" y="707.5" width="29" height="29" fill="none" stroke="#fff"/>
<path d="M962.5 707.5L972.5 707.5L967.5 702.5Z" stroke="#44d444"/>
<path d="M965.5 717.5L958.5 717.5L958.5 729.5L965.5 729.5L965.5 723.5L961.5 723.5M969.5 723.5L976.5 723.5M980.5 717.5L987.5 717.5M983.5 717.5L983.5 729.5M980.5 729.5L987.5 729.5M991.5 729.5L991.5 717.5L998.5 729.5L998.5 717.5" stroke="#44d444"/>
<rect x="1001" y="701" width="43" height="43" fill="#1f1f1f"/>
<path d="M1003.5 711.5L1005.5 703.5L1007.5 711.5M1004.5 708.5L1006.5 708.5" stroke="#fff"/>
<path d="M1007.5 738.5L1037.5 708.5" stroke="#fff"/>
<path d="M1022.5 708.5L1022.5 738.5" stroke="#fff"/>
<path d="M1017.5 707.5L1027.5 707.5L1022.5 702.5Z" stroke="#44d444"/>
<rect x="1004" y="739" width="37" height="4" fill="#3a3a3a"/>
<rect x="1004" y="739" width="18" height="4" fill="#fff"/>
<path d="M1058.5 711.5L1060.5 703.5L1062.5 711.5M1059.5 708.5L1061.5 708.5" stroke="#fff"/>
<rect x="1062.5" y="707.5" width="29" height="29" fill="none" stroke="#fff"/>
<path d="M1077.5 708.5L1077.5 738.5" stroke="#fff"/>
<path d="M1072.5 707.5L1082.5 707.5L1077.5 702.5Z" stroke="#44d444"/>
<path d="M1069.5 717.5L1072.5 729.5L1076.5 717.5M1087.5 717.5L1080.5 717.5L1080.5 729.5L1087.5 729.5M1091.5 729.5L1094.5 717.5L1098.5 729.5M1092.5 724.5L1096.5 724.5" stroke="#fff"/>
<path d="M1060.5 727.5L1066.5 727.5L1066.5 737.5L1060.5 737.5L1060.5 727.5M1073.5 737.5h0M1086.5 727.5L1080.5 727.5L1080.5 732.5L1086.5 732.5L1086.5 737.5L1080.5 737.5M1090.5 727.5L1096.5 727.5L1096.5 737.5L1090.5 737.5L1090.5 727.5" stroke="#f0f050"/>
<rect x="1059" y="739" width="37" height="4" fill="#3a3a3a"/>
<rect x="1059" y="739" width="18" height="4" fill="#f0f030"/>
<path d="M1113.5 711.5L1113.5 703.5L1117.5 703.5L1117.5 707.5L1113.5 707.5" stroke="#fff"/>
<rect x="1117.5" y="707.5" width="29" height="29" fill="none" stroke="#fff"/>
<path d="M1132.5 708.5L1132.5 738.5" stroke="#fff"/>
<path d="M1127.5 707.5L1137.5 707.5L1132.5 702.5Z" stroke="#44d444"/>
<path d="M1124.5 717.5L1124.5 729.5L1131.5 729.5M1135.5 729.5L1135.5 717.5L1142.5 717.5L1142.5 723.5L1135.5 723.5M1153.5 717.5L1146.5 717.5L1146.5 729.5M1146.5 723.5L1149.5 723.5" stroke="#fff"/>
<path d="M1115.5 727.5L1121.5 727.5L1121.5 737.5L1115.5 737.5L1115.5 727.5M1128.5 737.5h0M1141.5 727.5L1135.5 727.5L1135.5 732.5L1141.5 732.5L1141.5 737.5L1135.5 737.5M1145.5 727.5L1151.5 727.5L1151.5 737.5L1145.5 737.5L1145.5 727.5" stroke="#33dd33"/>
<rect x="1114" y="739" width="37" height="4" fill="#3a3a3a"/>
<rect x="1114" y="739" width="18" height="4" fill="#11ee11"/>
<path d="M1168.5 703.5L1168.5 711.5L1170.5 711.5L1172.5 707.5L1170.5 703.5L1168.5 703.5" stroke="#fff"/>
<path d="M1187.5 708.5L1187.5 738.5" stroke="#fff"/>
<path d="M1182.5 707.5L1192.5 707.5L1187.5 702.5Z" stroke="#44d444"/>
<path d="M1182.5 717.5L1182.5 729.5L1186.5 729.5L1189.5 723.5L1186.5 717.5L1182.5 717.5" stroke="#fff"/>
<path d="M1173.5 727.5L1173.5 737.5M1180.5 727.5L1186.5 727.5L1186.5 737.5L1180.5 737.5L1180.5 727.5M1190.5 727.5L1196.5 727.5L1196.5 737.5L1190.5 737.5L1190.5 727.5M1200.5 727.5L1206.5 727.5L1206.5 737.5L1200.5 737.5L1200.5 727.5" stroke="#f08020"/>
<rect x="1169" y="739" width="37" height="4" fill="#3a3a3a"/>
<rect x="1169" y="739" width="18" height="4" fill="#f08020"/>
<path d="M1223.5 711.5L1223.5 703.5L1227.5 703.5L1227.5 707.5L1223.5 707.5M1224.5 708.5L1227.5 711.5" stroke="#fff"/>
<path d="M1242.5 708.5L1242.5 738.5" stroke="#fff"/>
<path d="M1237.5 707.5L1247.5 707.5L1242.5 702.5Z" stroke="#44d444"/>
<path d="M1237.5 729.5L1237.5 717.5L1244.5 717.5L1244.5 723.5L1237.5 723.5M1238.5 724.5L1244.5 729.5" stroke="#fff"/>
<path d="M1225.5 727.5L1231.5 727.5L1231.5 737.5L1225.5 737.5L1225.5 727.5M1238.5 737.5h0M1251.5 727.5L1245.5 727.5L1245.5 732.5L1251.5 732.5L1251.5 737.5L1245.5 737.5M1255.5 727.5L1261.5 727.5L1261.5 737.5L1255.5 737.5L1255.5 727.5" stroke="#c060f0"/>
<rect x="1224" y="739" width="37" height="4" fill="#3a3a3a"/>
<rect x="1224" y="739" width="18" height="4" fill="#c060f0"/>
<rect x="1297" y="722" width="1" height="1" fill="#d8d8d8"/>
<rect x="1530" y="760" width="1" height="1" fill="#171717"/>
<rect x="1530" y="759" width="1" height="1" fill="#171717"/>
<rect x="1529" y="760" width="1" height="1" fill="#171717"/>
<rect x="1529" y="759" width="1" height="1" fill="#5a5d63"/>
<rect x="1530" y="758" width="1" height="1" fill="#5a5d63"/>
<rect x="1528" y="760" width="1" height="1" fill="#5a5d63"/>
<rect x="1528" y="759" width="1" height="1" fill="#2a2a2a"/>
<rect x="1529" y="758" width="1" height="1" fill="#2a2a2a"/>
</svg>
</body></html>
